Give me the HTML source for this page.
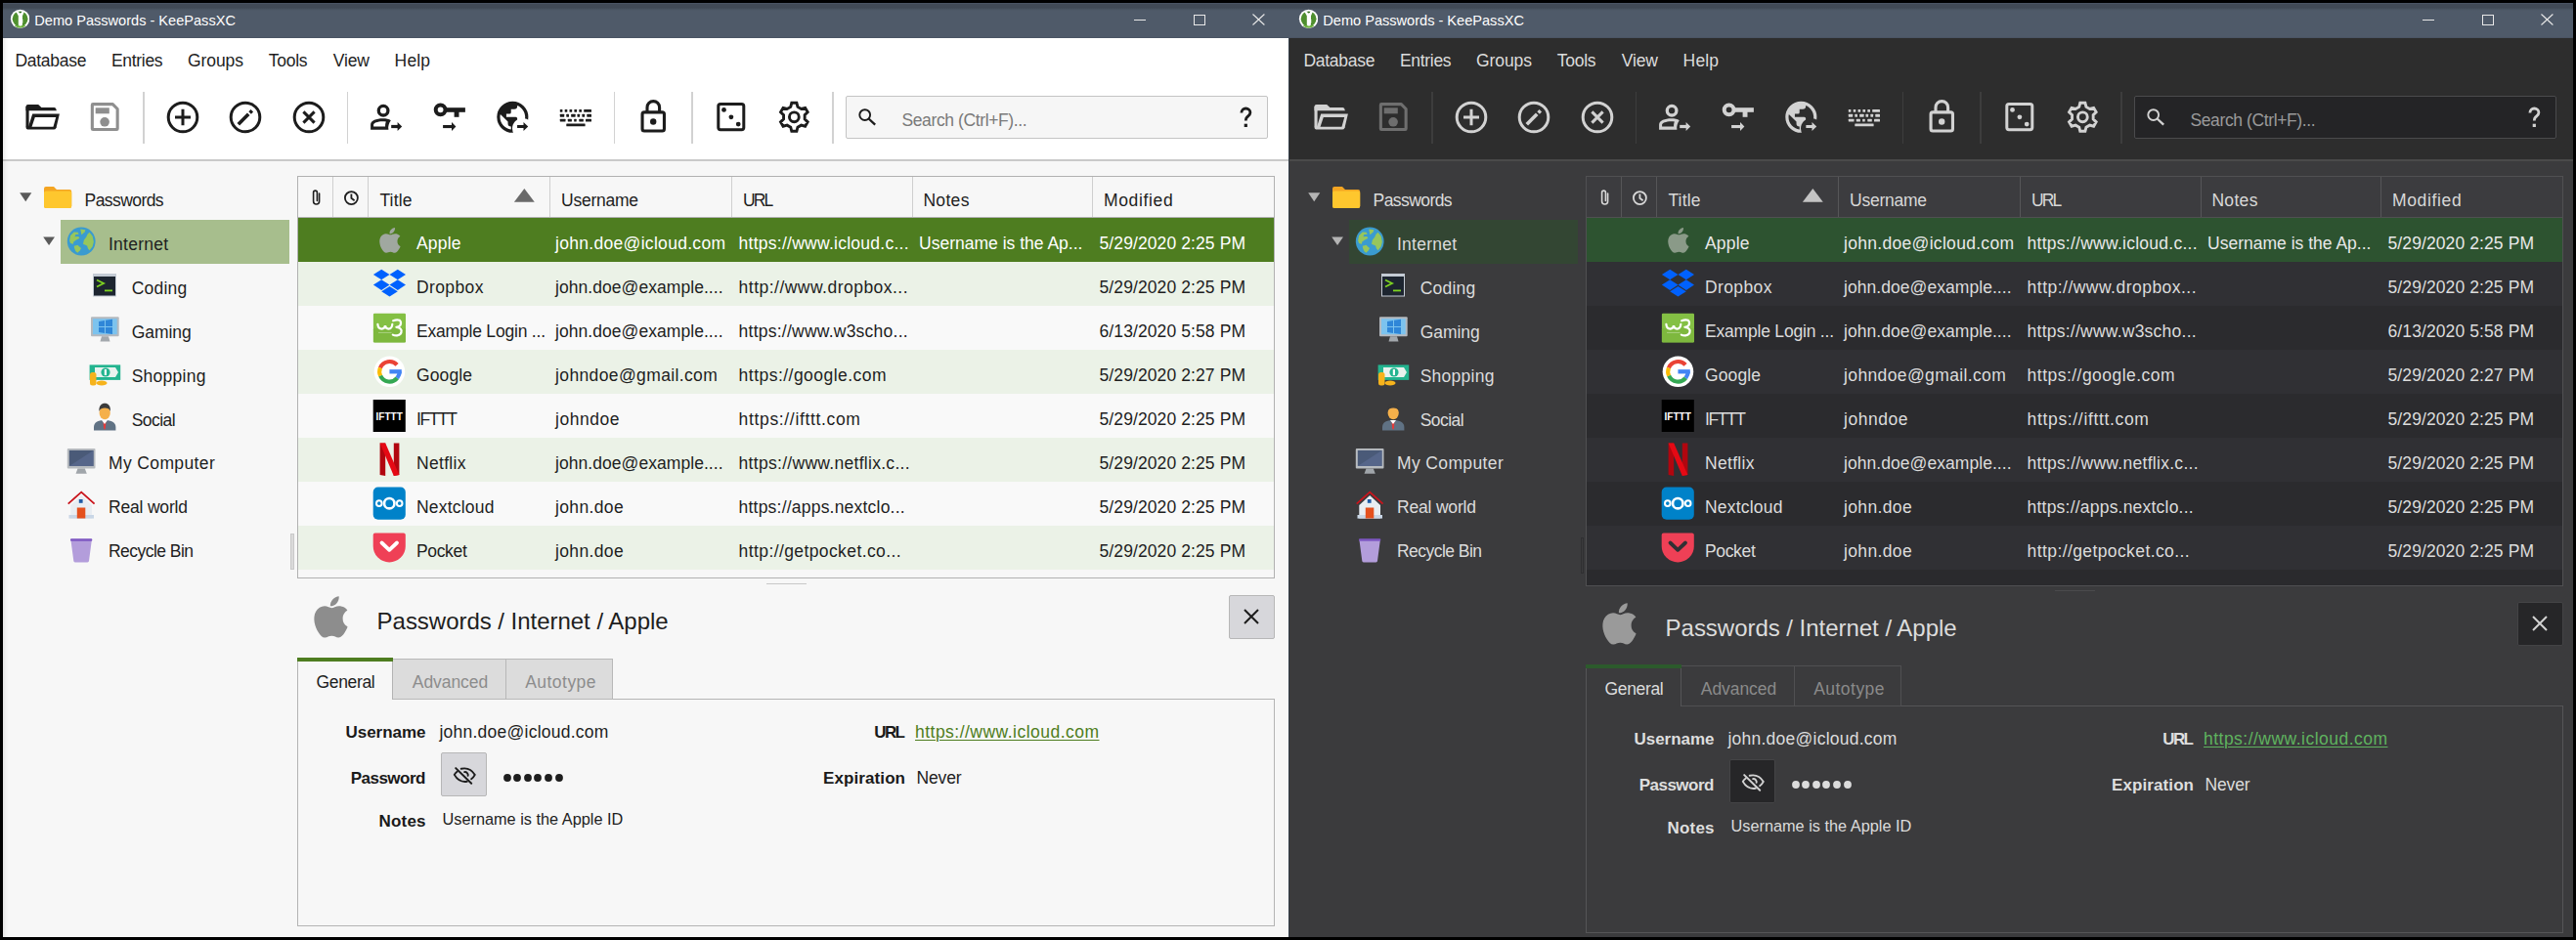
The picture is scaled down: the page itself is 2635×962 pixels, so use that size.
<!DOCTYPE html><html><head><meta charset="utf-8"><style>html,body{margin:0;padding:0;}body{width:2635px;height:962px;background:#000;position:relative;overflow:hidden;font-family:"Liberation Sans",sans-serif;}body>div,body>svg{position:absolute;}</style></head><body>
<div style="left:3.00px;top:3.00px;width:1315.00px;height:956.00px;background:#f7f7f7;"></div>
<div style="left:3.00px;top:3.00px;width:1315.00px;height:36.00px;background:linear-gradient(#4a5462 0px,#4a5462 0.8px,#414a56 1px,#414a56 5px,#4c5765 7px,#4f5a69 8.5px,#4f5a69 34.6px,#4a5463 35.2px);"></div>
<svg style="left:9.60px;top:9.00px;width:20.70px;height:20.70px" viewBox="9.60 9.00 20.70 20.70"><g transform="translate(0.00,0)"><circle cx="20.2" cy="19.35" r="9.7" fill="#ffffff"/><circle cx="20.2" cy="19.35" r="7.9" fill="#4f8f2f"/><path d="M20.2 21 m-6 5 a7.9 7.9 0 0 0 12 0 Z" fill="#6db33f"/><path d="M16 11.9 Q20.2 10.9 24.4 11.9 L22.6 16.2 V20 L23.3 20.8 L22.5 21.6 L23.2 22.5 L22.5 23.4 V25.6 L21.4 26.4 H19.4 L18.4 25.4 V16.2 Z" fill="#ffffff"/><ellipse cx="20.3" cy="12.6" rx="1.5" ry="0.8" fill="#2f6a1f"/></g></svg>
<div style="left:35.30px;top:14.24px;font-size:14.60px;line-height:14.60px;color:#ffffff;white-space:pre;letter-spacing:-0.015px;">Demo Passwords - KeePassXC</div>
<div style="left:1160.00px;top:19.50px;width:12.00px;height:1.00px;background:#e8e8e8;"></div>
<div style="left:1220.80px;top:14.50px;width:11.90px;height:11.10px;background:transparent;border:1px solid #e8e8e8;box-sizing:border-box;"></div>
<svg style="left:1281.00px;top:14.00px;width:13.00px;height:12.00px" viewBox="1281.00 14.00 13.00 12.00"><path d="M1281.5 14.5 L1293.4 25.5 M1293.4 14.5 L1281.5 25.5" stroke="#e8e8e8" stroke-width="1.1"/></svg>
<div style="left:3.00px;top:39.00px;width:1315.00px;height:124.00px;background:#ffffff;"></div>
<div style="left:3.00px;top:163.00px;width:1315.00px;height:2.00px;background:#c9c9c9;"></div>
<div style="left:15.40px;top:53.99px;font-size:17.50px;line-height:17.50px;color:#1e1e1e;white-space:pre;letter-spacing:-0.271px;">Database</div>
<div style="left:114.00px;top:53.99px;font-size:17.50px;line-height:17.50px;color:#1e1e1e;white-space:pre;letter-spacing:-0.321px;">Entries</div>
<div style="left:192.00px;top:53.99px;font-size:17.50px;line-height:17.50px;color:#1e1e1e;white-space:pre;letter-spacing:-0.080px;">Groups</div>
<div style="left:274.70px;top:53.99px;font-size:17.50px;line-height:17.50px;color:#1e1e1e;white-space:pre;letter-spacing:-0.241px;">Tools</div>
<div style="left:340.80px;top:53.99px;font-size:17.50px;line-height:17.50px;color:#1e1e1e;white-space:pre;letter-spacing:-0.142px;">View</div>
<div style="left:403.60px;top:53.99px;font-size:17.50px;line-height:17.50px;color:#1e1e1e;white-space:pre;letter-spacing:0.146px;">Help</div>
<svg style="left:24.00px;top:104.00px;width:39.00px;height:31.00px" viewBox="24.00 104.00 39.00 31.00"><g transform="translate(0.00,0)" fill="#1c1c1c"><path d="M26.5 113.2 V109.1 Q26.5 106.9 28.7 106.9 H39.2 L42.4 110 H55.6 Q57.3 110.1 57.9 113.2 Z"/><rect x="26.5" y="109" width="3.1" height="21"/><path d="M26.5 129.7 H57.9 L57.4 131 Q56.8 132.6 55 132.6 H29.4 Q26.5 132.6 26.5 130 Z"/><path d="M33.2 116.5 H60.9 L57.6 130.5 H54.3 L57.2 119.9 H35.8 L32.3 130.5 H28.8 Z"/></g></svg>
<svg style="left:91.00px;top:103.00px;width:33.00px;height:33.00px" viewBox="91.00 103.00 33.00 33.00"><g transform="translate(0.00,0)"><path d="M94.35 107.4 Q94.35 106.65 95.1 106.65 H115.3 L120.15 111.5 V131.7 Q120.15 132.45 119.4 132.45 H95.1 Q94.35 132.45 94.35 131.7 Z" fill="none" stroke="#8f8f8f" stroke-width="3.1" stroke-linejoin="round"/><rect x="97.7" y="110.3" width="14.1" height="6" fill="#8f8f8f"/><circle cx="107.1" cy="124.8" r="4.8" fill="#8f8f8f"/></g></svg>
<div style="left:146.40px;top:94.20px;width:1.20px;height:52.60px;background:#d2d2d2;"></div>
<div style="left:354.80px;top:94.20px;width:1.20px;height:52.60px;background:#d2d2d2;"></div>
<div style="left:627.90px;top:94.20px;width:1.20px;height:52.60px;background:#d2d2d2;"></div>
<div style="left:707.40px;top:94.20px;width:1.20px;height:52.60px;background:#d2d2d2;"></div>
<div style="left:851.40px;top:94.20px;width:1.20px;height:52.60px;background:#d2d2d2;"></div>
<svg style="left:169.60px;top:102.80px;width:34.00px;height:34.00px" viewBox="169.60 102.80 34.00 34.00"><circle cx="186.60" cy="119.80" r="14.8" fill="none" stroke="#1c1c1c" stroke-width="3"/><path d="M178.60 119.80 H194.60 M186.60 111.60 V128.00" stroke="#1c1c1c" stroke-width="3"/></svg>
<svg style="left:234.30px;top:102.80px;width:34.00px;height:34.00px" viewBox="234.30 102.80 34.00 34.00"><circle cx="251.30" cy="119.80" r="14.8" fill="none" stroke="#1c1c1c" stroke-width="3"/><path d="M244.10 127.00 L254.50 116.60" stroke="#1c1c1c" stroke-width="3.6"/><path d="M255.90 115.20 L258.10 113.00" stroke="#1c1c1c" stroke-width="3.6"/></svg>
<svg style="left:299.00px;top:102.80px;width:34.00px;height:34.00px" viewBox="299.00 102.80 34.00 34.00"><circle cx="316.00" cy="119.80" r="14.8" fill="none" stroke="#1c1c1c" stroke-width="3"/><path d="M310.40 114.20 L321.60 125.40 M321.60 114.20 L310.40 125.40" stroke="#1c1c1c" stroke-width="3"/></svg>
<svg style="left:377.00px;top:104.00px;width:36.00px;height:32.00px" viewBox="377.00 104.00 36.00 32.00"><g transform="translate(0.00,0)" fill="#1c1c1c"><circle cx="392.1" cy="113.2" r="4.8" fill="none" stroke="#1c1c1c" stroke-width="3.3"/><path fill-rule="evenodd" d="M379.1 132.8 V127.5 C379.1 123.5 385 121.3 391.5 121.3 C395 121.3 398 121.8 399.8 123.2 C398 125.5 396.6 129.5 397.4 132.8 Z M382.1 129.6 H394.1 C394 127.6 394.3 125.9 394.9 124.6 C393.6 124.4 392.5 124.3 391.5 124.3 C386 124.3 382.1 126 382.1 127.8 Z"/><rect x="400.2" y="127.9" width="7.2" height="3.2"/><path d="M406.6 124.9 L411.2 129.5 L406.6 134 Z"/></g></svg>
<svg style="left:441.00px;top:103.00px;width:37.00px;height:33.00px" viewBox="441.00 103.00 37.00 33.00"><g transform="translate(0.00,0)" fill="#1c1c1c"><circle cx="450.6" cy="112.3" r="4.9" fill="none" stroke="#1c1c1c" stroke-width="4"/><rect x="456" y="110.2" width="19.9" height="4.6"/><rect x="464.6" y="114" width="4.9" height="5.8"/><rect x="453.1" y="128" width="9.4" height="3.1"/><path d="M462 124.9 L466.4 129.5 L462 134 Z"/></g></svg>
<svg style="left:506.00px;top:102.00px;width:37.00px;height:36.00px" viewBox="506.00 102.00 37.00 36.00"><g transform="translate(0.00,0)"><g transform="translate(524.35,119.8) scale(1.605) translate(-12,-12)"><path fill="#1c1c1c" fill-rule="evenodd" d="M17.9,17.39C17.64,16.59 16.89,16 16,16H15V13A1,1 0 0,0 14,12H8V10H10A1,1 0 0,0 11,9V7H13A2,2 0 0,0 15,5V4.59C17.93,5.77 20,8.64 20,12C20,14.08 19.2,15.97 17.9,17.39M11,19.93C7.05,19.44 4,16.08 4,12C4,11.38 4.08,10.78 4.21,10.21L9,15V16A2,2 0 0,0 11,18M12,2A10,10 0 0,0 2,12A10,10 0 0,0 12,22A10,10 0 0,0 22,12A10,10 0 0,0 12,2Z"/></g><circle cx="534.6" cy="131.6" r="10.6" fill="#ffffff"/><rect x="529.3" y="128" width="7" height="3"/><path d="M535.5 125 L540.2 129.5 L535.5 134 Z" fill="#1c1c1c"/><rect x="529.3" y="128" width="7" height="3" fill="#1c1c1c"/></g></svg>
<svg style="left:571.00px;top:110.00px;width:36.00px;height:21.00px" viewBox="571.00 110.00 36.00 21.00"><g transform="translate(0.00,0)"><rect x="572.80" y="111.90" width="2.60" height="2.90" rx="0.5" fill="#1c1c1c"/><rect x="577.70" y="111.90" width="2.60" height="2.90" rx="0.5" fill="#1c1c1c"/><rect x="582.50" y="111.90" width="2.70" height="2.90" rx="0.5" fill="#1c1c1c"/><rect x="587.40" y="111.90" width="2.70" height="2.90" rx="0.5" fill="#1c1c1c"/><rect x="592.30" y="111.90" width="2.70" height="2.90" rx="0.5" fill="#1c1c1c"/><rect x="597.20" y="111.90" width="7.80" height="2.90" rx="0.5" fill="#1c1c1c"/><rect x="572.80" y="116.80" width="4.40" height="2.90" rx="0.5" fill="#1c1c1c"/><rect x="579.30" y="116.80" width="2.70" height="2.90" rx="0.5" fill="#1c1c1c"/><rect x="584.20" y="116.80" width="4.40" height="2.90" rx="0.5" fill="#1c1c1c"/><rect x="590.50" y="116.80" width="2.60" height="2.90" rx="0.5" fill="#1c1c1c"/><rect x="595.40" y="116.80" width="2.70" height="2.90" rx="0.5" fill="#1c1c1c"/><rect x="600.30" y="116.80" width="4.70" height="2.90" rx="0.5" fill="#1c1c1c"/><rect x="572.80" y="121.70" width="5.70" height="2.90" rx="0.5" fill="#1c1c1c"/><rect x="580.80" y="121.70" width="4.10" height="2.90" rx="0.5" fill="#1c1c1c"/><rect x="587.20" y="121.70" width="2.50" height="2.90" rx="0.5" fill="#1c1c1c"/><rect x="592.30" y="121.70" width="4.50" height="2.90" rx="0.5" fill="#1c1c1c"/><rect x="599.00" y="121.70" width="6.00" height="2.90" rx="0.5" fill="#1c1c1c"/><rect x="579.30" y="126.40" width="19.30" height="2.90" rx="0.5" fill="#1c1c1c"/></g></svg>
<svg style="left:653.00px;top:100.00px;width:31.00px;height:38.00px" viewBox="653.00 100.00 31.00 38.00"><g transform="translate(0.00,0)" fill="none" stroke="#1c1c1c" stroke-width="3.1"><path d="M662 115 V109.9 A6.2 6.2 0 0 1 674.6 109.9 V115"/><rect x="657.05" y="114.85" width="22.4" height="19.2" rx="2"/><circle cx="668.2" cy="124.5" r="3.2" fill="#1c1c1c" stroke="none"/></g></svg>
<svg style="left:731.00px;top:103.00px;width:34.00px;height:34.00px" viewBox="731.00 103.00 34.00 34.00"><g transform="translate(0.00,0)"><rect x="734.8" y="106.4" width="26" height="26.4" rx="2.2" fill="none" stroke="#1c1c1c" stroke-width="3"/><circle cx="740.5" cy="112.4" r="2.4" fill="#1c1c1c"/><circle cx="747.9" cy="119.8" r="2.4" fill="#1c1c1c"/><circle cx="755.2" cy="127.1" r="2.4" fill="#1c1c1c"/></g></svg>
<svg style="left:794.00px;top:102.00px;width:37.00px;height:36.00px" viewBox="794.00 102.00 37.00 36.00"><g transform="translate(0.00,0)" fill="none" stroke="#1c1c1c" stroke-width="2.9" stroke-linejoin="miter"><path d="M808.75 109.40 L809.80 105.30 L814.90 105.30 L815.95 109.40 L819.56 111.48 L823.63 110.34 L826.18 114.76 L823.16 117.72 L823.16 121.88 L826.18 124.84 L823.63 129.26 L819.56 128.12 L815.95 130.20 L814.90 134.30 L809.80 134.30 L808.75 130.20 L805.14 128.12 L801.07 129.26 L798.52 124.84 L801.54 121.88 L801.54 117.72 L798.52 114.76 L801.07 110.34 L805.14 111.48 Z"/><circle cx="812.35" cy="119.80" r="4.9"/></g></svg>
<div style="left:865.00px;top:97.60px;width:431.50px;height:44.00px;background:#f6f6f6;border:1px solid #c4c4c4;box-sizing:border-box;border-radius:2px;"></div>
<svg style="left:876.00px;top:108.00px;width:22.00px;height:22.00px" viewBox="876.00 108.00 22.00 22.00"><g transform="translate(0.00,0)" fill="none" stroke="#1c1c1c"><circle cx="884.7" cy="117.6" r="5.4" stroke-width="1.9"/><path d="M888.6 121.5 L895.2 127.6" stroke-width="2.3"/></g></svg>
<div style="left:922.50px;top:115.49px;font-size:17.50px;line-height:17.50px;color:#7a7a7a;white-space:pre;letter-spacing:-0.392px;">Search (Ctrl+F)...</div>
<svg style="left:1266.00px;top:108.00px;width:17.00px;height:24.00px" viewBox="1266.00 108.00 17.00 24.00"><g transform="translate(0.00,0)" fill="none" stroke="#1c1c1c" stroke-width="2.8"><path d="M1269.9 115.6 C1269.9 112.6 1271.9 111 1274.3 111 C1276.9 111 1278.9 112.8 1278.9 115.2 C1278.9 117.6 1277 118.6 1275.6 119.9 C1274.6 120.8 1274.3 121.6 1274.3 123.6"/><rect x="1272.7" y="126.7" width="3.2" height="3.3" fill="#1c1c1c" stroke="none"/></g></svg>
<div style="left:62.00px;top:225.00px;width:234.00px;height:44.50px;background:#a7be8d;"></div>
<div style="left:86.60px;top:197.09px;font-size:17.50px;line-height:17.50px;color:#1e1e1e;white-space:pre;letter-spacing:-0.572px;">Passwords</div>
<div style="left:110.90px;top:241.99px;font-size:17.50px;line-height:17.50px;color:#1e1e1e;white-space:pre;letter-spacing:0.282px;">Internet</div>
<div style="left:134.70px;top:286.89px;font-size:17.50px;line-height:17.50px;color:#1e1e1e;white-space:pre;letter-spacing:0.205px;">Coding</div>
<div style="left:134.70px;top:331.79px;font-size:17.50px;line-height:17.50px;color:#1e1e1e;white-space:pre;letter-spacing:-0.050px;">Gaming</div>
<div style="left:134.70px;top:376.69px;font-size:17.50px;line-height:17.50px;color:#1e1e1e;white-space:pre;letter-spacing:0.252px;">Shopping</div>
<div style="left:134.70px;top:421.59px;font-size:17.50px;line-height:17.50px;color:#1e1e1e;white-space:pre;letter-spacing:-0.537px;">Social</div>
<div style="left:111.00px;top:466.49px;font-size:17.50px;line-height:17.50px;color:#1e1e1e;white-space:pre;letter-spacing:0.370px;">My Computer</div>
<div style="left:111.00px;top:511.39px;font-size:17.50px;line-height:17.50px;color:#1e1e1e;white-space:pre;letter-spacing:-0.188px;">Real world</div>
<div style="left:111.00px;top:556.29px;font-size:17.50px;line-height:17.50px;color:#1e1e1e;white-space:pre;letter-spacing:-0.540px;">Recycle Bin</div>
<svg style="left:20.00px;top:197.00px;width:13.00px;height:10.00px" viewBox="20.00 197.00 13.00 10.00"><path d="M20.20 197.2 L32.30 197.2 L26.25 206.2 Z" fill="#5a5a5a"/></svg>
<svg style="left:44.00px;top:242.00px;width:13.00px;height:10.00px" viewBox="44.00 242.00 13.00 10.00"><path d="M44.20 242.6 L56.00 242.6 L50.10 250.9 Z" fill="#5a5a5a"/></svg>
<svg style="left:44.00px;top:189.00px;width:31.00px;height:26.00px" viewBox="44.00 189.00 31.00 26.00"><g transform="translate(0.00,0)"><path d="M45 193 A2 2 0 0 1 47 191 H55 L58 194 H71.2 A2 2 0 0 1 73.2 196 V211 A2 2 0 0 1 71.2 213 H47 A2 2 0 0 1 45 211 Z" fill="#f4a522"/><path d="M45 197 A2 2 0 0 1 47 195.5 H71.2 A2 2 0 0 1 73.2 197.5 V211 A2 2 0 0 1 71.2 213 H47 A2 2 0 0 1 45 211 Z" fill="#fec72e"/></g></svg>
<svg style="left:67.00px;top:231.00px;width:32.00px;height:32.00px" viewBox="67.00 231.00 32.00 32.00"><g transform="translate(0.00,0)"><circle cx="83.2" cy="247" r="14.4" fill="#3a9bd0"/><path d="M71.1 246.2 L72.1 240.9 L75.7 237.5 L79.8 237.7 L80.6 239.7 L77.3 240.1 L76.5 242.3 L80.2 242 L81.4 243.8 L77.7 245.8 L75.3 247.4 L74.9 249.8 L72.1 249 Z" fill="#97c65c"/><path d="M82.2 234.5 L87.4 235.3 L86.6 237.5 L83.4 240.3 Z" fill="#97c65c"/><path d="M75.7 251.8 L79.4 250.8 L83 253.9 L81.8 256.3 L79.4 258.7 L77.3 257.1 L76.1 253.9 Z" fill="#97c65c"/><path d="M91.5 237.7 L94.7 241.7 L95.9 247.4 L94.7 252.3 L91.5 256.3 L89.9 254.3 L89.1 251.4 L85 249.8 L85.8 245.8 L88.3 242.6 L89.5 239.7 Z" fill="#97c65c"/></g></svg>
<svg style="left:94.00px;top:279.00px;width:27.00px;height:26.00px" viewBox="94.00 279.00 27.00 26.00"><g transform="translate(0.00,0)"><rect x="95" y="280" width="24" height="23.5" fill="#c4cbd4"/><rect x="96" y="283" width="22" height="19.5" fill="#1d2530"/><path d="M99 286.5 L106 290 L99 293.5" fill="none" stroke="#7ed321" stroke-width="1.8"/><rect x="107" y="296.5" width="8" height="1.8" fill="#7ed321"/></g></svg>
<svg style="left:92.00px;top:323.00px;width:31.00px;height:28.00px" viewBox="92.00 323.00 31.00 28.00"><g transform="translate(0.00,0)"><rect x="93" y="324.2" width="28.7" height="20" rx="1" fill="#b4b9bf"/><rect x="95" y="326.2" width="24.7" height="16" fill="#7cc3ee"/><path d="M101 329 L107 328 V334 H101 Z M108 327.8 L115 326.8 V334 H108 Z M101 335 H107 V341 L101 340 Z M108 335 H115 V342 L108 341 Z" fill="#2f86d8"/><path d="M104 344.2 H111 L112.5 349.5 H102.5 Z" fill="#a3a8ad"/></g></svg>
<svg style="left:90.00px;top:372.00px;width:35.00px;height:24.00px" viewBox="90.00 372.00 35.00 24.00"><g transform="translate(0.00,0)"><rect x="91.6" y="373.4" width="31.6" height="15.5" fill="#23b48f"/><path d="M97 376 H118 L121 381 L118 386 H97 Z" fill="#e8f2ee"/><circle cx="108" cy="381" r="4.6" fill="#23b48f"/><rect x="106.8" y="378" width="2.2" height="6" fill="#ffffff"/><rect x="92" y="381" width="6.5" height="13.5" rx="2.5" fill="#f6b31c"/><ellipse cx="104" cy="392" rx="5.5" ry="2.6" fill="#f6b31c"/></g></svg>
<svg style="left:95.00px;top:411.00px;width:25.00px;height:31.00px" viewBox="95.00 411.00 25.00 31.00"><g transform="translate(0.00,0)"><path d="M96 440.5 V437 C96 432.5 100 430 107 430 C114 430 118.4 432.5 118.4 437 V440.5 Z" fill="#607284"/><path d="M105.5 430.5 L108.5 430.5 L108 438 L107 440 L106 438 Z" fill="#e23b3b"/><path d="M104 430 L107 434 L110 430 Z" fill="#ffffff"/><ellipse cx="107.2" cy="422.5" rx="5.6" ry="6.8" fill="#f5b04a"/><path d="M101.4 421 C101 415 104 412.7 107.2 412.7 C110.5 412.7 113.3 415 113 421 C112 418 110 417.5 107.2 417.5 C104.3 417.5 102.5 418 101.4 421 Z" fill="#3b3b3b"/></g></svg>
<svg style="left:67.00px;top:457.00px;width:32.00px;height:29.00px" viewBox="67.00 457.00 32.00 29.00"><g transform="translate(0.00,0)"><rect x="68.8" y="458.9" width="28.7" height="20.5" rx="1" fill="#b8bcc0"/><rect x="70.8" y="460.9" width="24.7" height="16" fill="#4a5a78"/><path d="M70.8 476.9 L95.5 460.9 V476.9 Z" fill="#56668a"/><path d="M79.5 479.4 H86.8 L88.8 484.8 H77.5 Z" fill="#a0a5aa"/></g></svg>
<svg style="left:68.00px;top:502.00px;width:30.00px;height:30.00px" viewBox="68.00 502.00 30.00 30.00"><g transform="translate(0.00,0)"><path d="M72.3 517 L83.2 507 L94 517 V530.6 H72.3 Z" fill="#e9edf2"/><rect x="70.5" y="527" width="25.5" height="3.6" fill="#c9d6e6"/><path d="M69.7 515.6 L83.2 503.6 L96.6 515.6" fill="none" stroke="#c9141c" stroke-width="1.8"/><rect x="80.8" y="511" width="3.8" height="3.8" fill="#1f5aa6"/><rect x="78.8" y="519.5" width="8.5" height="11" fill="#e4501e"/></g></svg>
<svg style="left:71.00px;top:550.00px;width:25.00px;height:27.00px" viewBox="71.00 550.00 25.00 27.00"><g transform="translate(0.00,0)"><path d="M72.5 553 H93.8 L91 574 A1.5 1.5 0 0 1 89.5 575.4 H76.8 A1.5 1.5 0 0 1 75.3 574 Z" fill="#b39ddb"/><rect x="72" y="551.2" width="22.3" height="2.6" rx="1" fill="#7e57c2"/></g></svg>
<div style="left:297.00px;top:546.00px;width:4.00px;height:36.50px;background:#dadada;border:1px solid #c9c9c9;box-sizing:border-box;"></div>
<div style="left:3.00px;top:39.00px;width:6.00px;height:920.00px;background:linear-gradient(to right, rgba(0,0,0,0.08), rgba(0,0,0,0.02) 60%, rgba(0,0,0,0));"></div>
<div style="left:304.00px;top:180.00px;width:1000.00px;height:412.00px;background:#f7f7f7;border:1px solid #b1b1b1;box-sizing:border-box;"></div>
<div style="left:305.00px;top:181.00px;width:998.00px;height:41.00px;background:#f7f7f7;"></div>
<div style="left:305.00px;top:222.00px;width:998.00px;height:1.00px;background:#b1b1b1;"></div>
<div style="left:340.00px;top:181.00px;width:1.00px;height:41.00px;background:#cfcfcf;"></div>
<div style="left:376.00px;top:181.00px;width:1.00px;height:41.00px;background:#cfcfcf;"></div>
<div style="left:562.00px;top:181.00px;width:1.00px;height:41.00px;background:#cfcfcf;"></div>
<div style="left:748.00px;top:181.00px;width:1.00px;height:41.00px;background:#cfcfcf;"></div>
<div style="left:933.00px;top:181.00px;width:1.00px;height:41.00px;background:#cfcfcf;"></div>
<div style="left:1117.00px;top:181.00px;width:1.00px;height:41.00px;background:#cfcfcf;"></div>
<div style="left:388.40px;top:197.09px;font-size:17.50px;line-height:17.50px;color:#1e1e1e;white-space:pre;letter-spacing:0.156px;">Title</div>
<div style="left:574.10px;top:197.09px;font-size:17.50px;line-height:17.50px;color:#1e1e1e;white-space:pre;letter-spacing:-0.252px;">Username</div>
<div style="left:760.00px;top:197.09px;font-size:17.50px;line-height:17.50px;color:#1e1e1e;white-space:pre;letter-spacing:-1.850px;">URL</div>
<div style="left:944.40px;top:197.09px;font-size:17.50px;line-height:17.50px;color:#1e1e1e;white-space:pre;letter-spacing:0.331px;">Notes</div>
<div style="left:1129.00px;top:197.09px;font-size:17.50px;line-height:17.50px;color:#1e1e1e;white-space:pre;letter-spacing:0.650px;">Modified</div>
<svg style="left:316.00px;top:191.00px;width:16.00px;height:22.00px" viewBox="316.00 191.00 16.00 22.00"><g transform="translate(0.00,0)" fill="none" stroke="#1e1e1e" stroke-width="1.6" stroke-linecap="round"><path d="M326.6 198 V206 A3 3 0 0 1 320.6 206 V197 A1.9 1.9 0 0 1 324.4 197 V205.5"/></g></svg>
<svg style="left:350.00px;top:194.00px;width:19.00px;height:18.00px" viewBox="350.00 194.00 19.00 18.00"><g transform="translate(0.00,0)" fill="none" stroke="#1e1e1e" stroke-width="1.8"><circle cx="359.4" cy="202.6" r="6.5"/><path d="M359.4 198.5 V202.8 L362.6 205.2"/></g></svg>
<svg style="left:524.00px;top:191.00px;width:25.00px;height:18.00px" viewBox="524.00 191.00 25.00 18.00"><path d="M525.90 206.8 L536.35 192.9 L546.80 206.8 Z" fill="#6a6a6a"/></svg>
<div style="left:305.00px;top:222.50px;width:998.00px;height:45.00px;background:#4e7d20;"></div>
<div style="left:426.00px;top:240.69px;font-size:17.50px;line-height:17.50px;color:#ffffff;white-space:pre;letter-spacing:0.175px;">Apple</div>
<div style="left:568.04px;top:240.69px;font-size:17.50px;line-height:17.50px;color:#ffffff;white-space:pre;letter-spacing:0.302px;">john.doe@icloud.com</div>
<div style="left:755.60px;top:240.69px;font-size:17.50px;line-height:17.50px;color:#ffffff;white-space:pre;letter-spacing:0.261px;">https://www.icloud.c...</div>
<div style="left:940.00px;top:240.69px;font-size:17.50px;line-height:17.50px;color:#ffffff;white-space:pre;letter-spacing:0.005px;">Username is the Ap...</div>
<div style="left:1124.50px;top:240.69px;font-size:17.50px;line-height:17.50px;color:#ffffff;white-space:pre;letter-spacing:0.102px;">5/29/2020 2:25 PM</div>
<div style="left:305.00px;top:267.50px;width:998.00px;height:45.00px;background:#ebf2e7;"></div>
<div style="left:426.00px;top:285.69px;font-size:17.50px;line-height:17.50px;color:#1e1e1e;white-space:pre;letter-spacing:0.392px;">Dropbox</div>
<div style="left:568.04px;top:285.69px;font-size:17.50px;line-height:17.50px;color:#1e1e1e;white-space:pre;letter-spacing:0.054px;">john.doe@example....</div>
<div style="left:755.60px;top:285.69px;font-size:17.50px;line-height:17.50px;color:#1e1e1e;white-space:pre;letter-spacing:0.478px;">http://www.dropbox...</div>
<div style="left:1124.50px;top:285.69px;font-size:17.50px;line-height:17.50px;color:#1e1e1e;white-space:pre;letter-spacing:0.102px;">5/29/2020 2:25 PM</div>
<div style="left:305.00px;top:312.50px;width:998.00px;height:45.00px;background:#f9f9f9;"></div>
<div style="left:426.00px;top:330.69px;font-size:17.50px;line-height:17.50px;color:#1e1e1e;white-space:pre;letter-spacing:-0.199px;">Example Login ...</div>
<div style="left:568.04px;top:330.69px;font-size:17.50px;line-height:17.50px;color:#1e1e1e;white-space:pre;letter-spacing:0.054px;">john.doe@example....</div>
<div style="left:755.60px;top:330.69px;font-size:17.50px;line-height:17.50px;color:#1e1e1e;white-space:pre;letter-spacing:0.237px;">https://www.w3scho...</div>
<div style="left:1124.50px;top:330.69px;font-size:17.50px;line-height:17.50px;color:#1e1e1e;white-space:pre;letter-spacing:0.102px;">6/13/2020 5:58 PM</div>
<div style="left:305.00px;top:357.50px;width:998.00px;height:45.00px;background:#ebf2e7;"></div>
<div style="left:426.00px;top:375.69px;font-size:17.50px;line-height:17.50px;color:#1e1e1e;white-space:pre;letter-spacing:0.113px;">Google</div>
<div style="left:568.04px;top:375.69px;font-size:17.50px;line-height:17.50px;color:#1e1e1e;white-space:pre;letter-spacing:0.374px;">johndoe@gmail.com</div>
<div style="left:755.60px;top:375.69px;font-size:17.50px;line-height:17.50px;color:#1e1e1e;white-space:pre;letter-spacing:0.472px;">https://google.com</div>
<div style="left:1124.50px;top:375.69px;font-size:17.50px;line-height:17.50px;color:#1e1e1e;white-space:pre;letter-spacing:0.102px;">5/29/2020 2:27 PM</div>
<div style="left:305.00px;top:402.50px;width:998.00px;height:45.00px;background:#f9f9f9;"></div>
<div style="left:426.00px;top:420.69px;font-size:17.50px;line-height:17.50px;color:#1e1e1e;white-space:pre;letter-spacing:-1.400px;">IFTTT</div>
<div style="left:568.04px;top:420.69px;font-size:17.50px;line-height:17.50px;color:#1e1e1e;white-space:pre;letter-spacing:0.544px;">johndoe</div>
<div style="left:755.60px;top:420.69px;font-size:17.50px;line-height:17.50px;color:#1e1e1e;white-space:pre;letter-spacing:0.659px;">https://ifttt.com</div>
<div style="left:1124.50px;top:420.69px;font-size:17.50px;line-height:17.50px;color:#1e1e1e;white-space:pre;letter-spacing:0.102px;">5/29/2020 2:25 PM</div>
<div style="left:305.00px;top:447.50px;width:998.00px;height:45.00px;background:#ebf2e7;"></div>
<div style="left:426.00px;top:465.69px;font-size:17.50px;line-height:17.50px;color:#1e1e1e;white-space:pre;letter-spacing:0.308px;">Netflix</div>
<div style="left:568.04px;top:465.69px;font-size:17.50px;line-height:17.50px;color:#1e1e1e;white-space:pre;letter-spacing:0.054px;">john.doe@example....</div>
<div style="left:755.60px;top:465.69px;font-size:17.50px;line-height:17.50px;color:#1e1e1e;white-space:pre;letter-spacing:0.293px;">https://www.netflix.c...</div>
<div style="left:1124.50px;top:465.69px;font-size:17.50px;line-height:17.50px;color:#1e1e1e;white-space:pre;letter-spacing:0.102px;">5/29/2020 2:25 PM</div>
<div style="left:305.00px;top:492.50px;width:998.00px;height:45.00px;background:#f9f9f9;"></div>
<div style="left:426.00px;top:510.69px;font-size:17.50px;line-height:17.50px;color:#1e1e1e;white-space:pre;letter-spacing:0.202px;">Nextcloud</div>
<div style="left:568.04px;top:510.69px;font-size:17.50px;line-height:17.50px;color:#1e1e1e;white-space:pre;letter-spacing:0.350px;">john.doe</div>
<div style="left:755.60px;top:510.69px;font-size:17.50px;line-height:17.50px;color:#1e1e1e;white-space:pre;letter-spacing:0.210px;">https://apps.nextclo...</div>
<div style="left:1124.50px;top:510.69px;font-size:17.50px;line-height:17.50px;color:#1e1e1e;white-space:pre;letter-spacing:0.102px;">5/29/2020 2:25 PM</div>
<div style="left:305.00px;top:537.50px;width:998.00px;height:45.00px;background:#ebf2e7;"></div>
<div style="left:426.00px;top:555.69px;font-size:17.50px;line-height:17.50px;color:#1e1e1e;white-space:pre;letter-spacing:-0.352px;">Pocket</div>
<div style="left:568.04px;top:555.69px;font-size:17.50px;line-height:17.50px;color:#1e1e1e;white-space:pre;letter-spacing:0.350px;">john.doe</div>
<div style="left:755.60px;top:555.69px;font-size:17.50px;line-height:17.50px;color:#1e1e1e;white-space:pre;letter-spacing:0.401px;">http://getpocket.co...</div>
<div style="left:1124.50px;top:555.69px;font-size:17.50px;line-height:17.50px;color:#1e1e1e;white-space:pre;letter-spacing:0.102px;">5/29/2020 2:25 PM</div>
<svg style="left:385.60px;top:230.70px;width:25.60px;height:29.80px" viewBox="385.60 230.70 25.60 29.80"><g transform="translate(386.313,231.853) scale(0.6771,0.6515)" fill="#a0a8a0"><g transform="translate(21.65,6.2) scale(0.8) translate(-19.55,-5.9)"><path d="M24.5 0 C24.8 3.2 23.6 6.3 21.7 8.4 C19.9 10.5 17 12 14.3 11.8 C14 8.8 15.3 5.7 17.1 3.8 C19 1.7 22 0.2 24.5 0 Z"/></g><path d="M29.2 22.8 C29.2 17.5 33.4 15 33.6 14.8 C31.2 11.3 27.6 10.9 26.3 10.8 C23.2 10.5 20.3 12.6 18.7 12.6 C17.1 12.6 14.7 10.9 12.1 10.9 C8.7 11 5.6 12.9 3.9 15.9 C0.4 22 3 31 6.3 35.9 C8 38.3 9.9 41 12.4 40.9 C14.9 40.8 15.8 39.3 18.8 39.3 C21.8 39.3 22.6 40.9 25.2 40.9 C27.8 40.8 29.5 38.4 31.1 36 C33 33.3 33.8 30.6 33.8 30.5 C33.7 30.4 29.2 28.7 29.2 22.8 Z"/></g></svg>
<svg style="left:380.00px;top:274.00px;width:37.00px;height:31.00px" viewBox="380.00 274.00 37.00 31.00"><g transform="translate(0.00,0)"><g fill="#0061fe"><path d="M381.9 281 L390.2 275.7 L398.5 281 L390.2 286.3 Z"/><path d="M398.5 281 L406.8 275.7 L415 281 L406.8 286.3 Z"/><path d="M381.9 291.6 L390.2 286.3 L398.5 291.6 L390.2 296.9 Z"/><path d="M398.5 291.6 L406.8 286.3 L415 291.6 L406.8 296.9 Z"/><path d="M390.2 298.2 L398.5 292.9 L406.8 298.2 L398.5 303.5 Z"/></g></g></svg>
<svg style="left:380.00px;top:319.00px;width:37.00px;height:33.00px" viewBox="380.00 319.00 37.00 33.00"><g transform="translate(0.00,0)"><rect x="381.9" y="320.7" width="33.1" height="29.7" rx="1.2" fill="#84c044"/><rect x="381.9" y="336" width="33.1" height="14.4" rx="1.2" fill="#79b33b" opacity="0.6"/><path d="M386.4 331.8 Q386.6 336.6 390.6 336.6 Q393.6 336.6 394 333.2 Q394.4 336.6 397.4 336.6 Q401 336.6 401.3 331.8" fill="none" stroke="#ffffff" stroke-width="2.2" stroke-linecap="round"/><path d="M402.2 328.2 Q406 326.6 408.8 327.8 Q410.8 329.6 409.6 332.6 Q408.4 334.6 405.4 334.8 Q409.6 335 410.6 338.2 Q410.8 342.6 406.2 343.4 Q403.6 343.6 401.8 342.6" fill="none" stroke="#ffffff" stroke-width="2.2" stroke-linecap="round" stroke-linejoin="round"/><rect x="387" y="339.9" width="13.5" height="1" fill="#cfe6b8" opacity="0.55"/></g></svg>
<svg style="left:380.00px;top:363.00px;width:37.00px;height:35.00px" viewBox="380.00 363.00 37.00 35.00"><g transform="translate(0.00,0)"><circle cx="398.45" cy="380.30" r="15.8" fill="#ffffff"/><path d="M406.07 373.44 A10.25 10.25 0 0 0 388.95 376.46" fill="none" stroke="#ea4335" stroke-width="4.2"/><path d="M388.95 376.46 A10.25 10.25 0 0 0 389.16 384.63" fill="none" stroke="#fbbc05" stroke-width="4.2"/><path d="M389.16 384.63 A10.25 10.25 0 0 0 406.30 386.89" fill="none" stroke="#34a853" stroke-width="4.2"/><path d="M406.30 386.89 A10.25 10.25 0 0 0 408.70 380.30" fill="none" stroke="#4285f4" stroke-width="4.2"/><rect x="398.45" y="378.15" width="12.35" height="4.3" fill="#4285f4"/></g></svg>
<svg style="left:380.00px;top:408.00px;width:37.00px;height:36.00px" viewBox="380.00 408.00 37.00 36.00"><g transform="translate(0.00,0)"><rect x="381.7" y="409" width="33.1" height="33" fill="#000000"/><text x="384.6" y="429.9" font-family="Liberation Sans" font-weight="bold" font-size="10.4" textLength="27.2" lengthAdjust="spacingAndGlyphs" fill="#ffffff">IFTTT</text></g></svg>
<svg style="left:387.00px;top:452.00px;width:23.00px;height:36.00px" viewBox="387.00 452.00 23.00 36.00"><g transform="translate(0.00,0)"><path d="M388.6 453.5 H394.2 V486.9 L388.6 486 Z" fill="#b1060f"/><path d="M402.8 453.5 H408.4 V486 L402.8 486.9 Z" fill="#b1060f"/><path d="M388.6 453.5 H394.2 L408.4 486 L402.8 486.9 Z" fill="#e50914"/></g></svg>
<svg style="left:380.00px;top:497.00px;width:37.00px;height:36.00px" viewBox="380.00 497.00 37.00 36.00"><g transform="translate(0.00,0)"><rect x="381.7" y="498.6" width="33.1" height="33.1" rx="5" fill="#0082c9"/><circle cx="398.25" cy="515.15" r="5.2" fill="none" stroke="#ffffff" stroke-width="2.6"/><circle cx="387.8" cy="515.15" r="2.8" fill="none" stroke="#ffffff" stroke-width="2"/><circle cx="408.7" cy="515.15" r="2.8" fill="none" stroke="#ffffff" stroke-width="2"/></g></svg>
<svg style="left:380.00px;top:544.00px;width:37.00px;height:33.00px" viewBox="380.00 544.00 37.00 33.00"><g transform="translate(0.00,0)"><path d="M381.7 547.5 A2 2 0 0 1 383.7 545.5 H412.8 A2 2 0 0 1 414.8 547.5 V559 A16.55 16.4 0 0 1 381.7 559 Z" fill="#ef4056"/><path d="M390.5 555.5 L398.25 562.8 L406 555.5" fill="none" stroke="#ffffff" stroke-width="3.8" stroke-linecap="round" stroke-linejoin="round"/></g></svg>
<div style="left:783.50px;top:596.50px;width:41.00px;height:1.00px;background:#c8c8c8;"></div>
<svg style="left:318.70px;top:608.40px;width:38.60px;height:46.50px" viewBox="318.70 608.40 38.60 46.50"><g transform="translate(318.639,609.005) scale(1.0846,1.0732)" fill="#8d8d8d"><g transform="translate(21.65,6.2) scale(0.8) translate(-19.55,-5.9)"><path d="M24.5 0 C24.8 3.2 23.6 6.3 21.7 8.4 C19.9 10.5 17 12 14.3 11.8 C14 8.8 15.3 5.7 17.1 3.8 C19 1.7 22 0.2 24.5 0 Z"/></g><path d="M29.2 22.8 C29.2 17.5 33.4 15 33.6 14.8 C31.2 11.3 27.6 10.9 26.3 10.8 C23.2 10.5 20.3 12.6 18.7 12.6 C17.1 12.6 14.7 10.9 12.1 10.9 C8.7 11 5.6 12.9 3.9 15.9 C0.4 22 3 31 6.3 35.9 C8 38.3 9.9 41 12.4 40.9 C14.9 40.8 15.8 39.3 18.8 39.3 C21.8 39.3 22.6 40.9 25.2 40.9 C27.8 40.8 29.5 38.4 31.1 36 C33 33.3 33.8 30.6 33.8 30.5 C33.7 30.4 29.2 28.7 29.2 22.8 Z"/></g></svg>
<div style="left:385.60px;top:624.08px;font-size:24.00px;line-height:24.00px;color:#1e1e1e;white-space:pre;letter-spacing:-0.030px;">Passwords / Internet / Apple</div>
<div style="left:1256.50px;top:608.50px;width:47.50px;height:45.50px;background:#d7d7db;border:1px solid #b7b7b7;box-sizing:border-box;border-radius:2px;"></div>
<svg style="left:1271.20px;top:622.20px;width:18.00px;height:18.00px" viewBox="1271.20 622.20 18.00 18.00"><path d="M1273.20 624.20 L1287.20 638.20 M1287.20 624.20 L1273.20 638.20" stroke="#1c1c1c" stroke-width="2"/></svg>
<div style="left:304.00px;top:715.00px;width:1000.00px;height:232.50px;background:#f7f7f7;border:1px solid #b4b4b4;box-sizing:border-box;"></div>
<div style="left:401.00px;top:673.50px;width:116.50px;height:42.00px;background:#dcdcdc;border:1px solid #b8b8b8;box-sizing:border-box;"></div>
<div style="left:517.00px;top:673.50px;width:109.50px;height:42.00px;background:#dcdcdc;border:1px solid #b8b8b8;box-sizing:border-box;"></div>
<div style="left:304.00px;top:673.00px;width:97.50px;height:43.00px;background:#f7f7f7;border:1px solid #b4b4b4;border-bottom:none;box-sizing:border-box;"></div>
<div style="left:304.00px;top:673.00px;width:97.50px;height:4.00px;background:#4e7d20;"></div>
<div style="left:323.60px;top:690.09px;font-size:17.50px;line-height:17.50px;color:#1e1e1e;white-space:pre;letter-spacing:-0.350px;">General</div>
<div style="left:421.80px;top:690.09px;font-size:17.50px;line-height:17.50px;color:#8c8c8c;white-space:pre;letter-spacing:-0.068px;">Advanced</div>
<div style="left:537.20px;top:690.09px;font-size:17.50px;line-height:17.50px;color:#8c8c8c;white-space:pre;letter-spacing:0.466px;">Autotype</div>
<div style="left:353.50px;top:740.71px;font-size:17.00px;line-height:17.00px;color:#1a1a1a;white-space:pre;font-weight:bold;letter-spacing:-0.028px;">Username</div>
<div style="left:449.44px;top:741.09px;font-size:17.50px;line-height:17.50px;color:#1e1e1e;white-space:pre;letter-spacing:0.241px;">john.doe@icloud.com</div>
<div style="left:358.70px;top:788.31px;font-size:17.00px;line-height:17.00px;color:#1a1a1a;white-space:pre;font-weight:bold;letter-spacing:-0.504px;">Password</div>
<div style="left:451.00px;top:770.00px;width:47.00px;height:45.00px;background:#d7d7db;border:1px solid #b7b7b7;box-sizing:border-box;border-radius:2px;"></div>
<svg style="left:460.50px;top:778.50px;width:28.00px;height:28.00px" viewBox="460.50 778.50 28.00 28.00"><g transform="translate(0.00,0.00)" fill="none" stroke="#1c1c1c" stroke-width="1.9" stroke-linecap="round"><path d="M471.2 786.3 Q480.2 784.2 485.3 792.4 Q484 795 481.6 796.7"/><path d="M467.3 789 Q465 790.8 464.3 792.4 Q469 800.6 477.3 799.3"/><path d="M474.6 789.6 A3.2 3.2 0 0 1 478.2 793.4"/><path d="M465.7 785.6 L481.7 801.3" stroke-width="2"/></g></svg>
<svg style="left:513.50px;top:791.00px;width:10.00px;height:10.00px" viewBox="513.50 791.00 10.00 10.00"><circle cx="518.50" cy="796.00" r="3.9" fill="#1e1e1e"/></svg>
<svg style="left:524.10px;top:791.00px;width:10.00px;height:10.00px" viewBox="524.10 791.00 10.00 10.00"><circle cx="529.10" cy="796.00" r="3.9" fill="#1e1e1e"/></svg>
<svg style="left:534.70px;top:791.00px;width:10.00px;height:10.00px" viewBox="534.70 791.00 10.00 10.00"><circle cx="539.70" cy="796.00" r="3.9" fill="#1e1e1e"/></svg>
<svg style="left:545.30px;top:791.00px;width:10.00px;height:10.00px" viewBox="545.30 791.00 10.00 10.00"><circle cx="550.30" cy="796.00" r="3.9" fill="#1e1e1e"/></svg>
<svg style="left:555.90px;top:791.00px;width:10.00px;height:10.00px" viewBox="555.90 791.00 10.00 10.00"><circle cx="560.90" cy="796.00" r="3.9" fill="#1e1e1e"/></svg>
<svg style="left:566.50px;top:791.00px;width:10.00px;height:10.00px" viewBox="566.50 791.00 10.00 10.00"><circle cx="571.50" cy="796.00" r="3.9" fill="#1e1e1e"/></svg>
<div style="left:387.50px;top:831.71px;font-size:17.00px;line-height:17.00px;color:#1a1a1a;white-space:pre;font-weight:bold;letter-spacing:0.185px;">Notes</div>
<div style="left:452.50px;top:830.10px;font-size:16.30px;line-height:16.30px;color:#1e1e1e;white-space:pre;letter-spacing:0.007px;">Username is the Apple ID</div>
<div style="left:894.30px;top:740.71px;font-size:17.00px;line-height:17.00px;color:#1a1a1a;white-space:pre;font-weight:bold;letter-spacing:-1.618px;">URL</div>
<div style="left:936.00px;top:741.09px;font-size:17.50px;line-height:17.50px;color:#4e7d20;white-space:pre;letter-spacing:0.477px;text-decoration:underline;text-decoration-thickness:1px;text-underline-offset:2px;">https://www.icloud.com</div>
<div style="left:842.00px;top:788.31px;font-size:17.00px;line-height:17.00px;color:#1a1a1a;white-space:pre;font-weight:bold;letter-spacing:0.097px;">Expiration</div>
<div style="left:937.40px;top:788.09px;font-size:17.50px;line-height:17.50px;color:#1e1e1e;white-space:pre;letter-spacing:-0.106px;">Never</div>
<div style="left:1318.00px;top:3.00px;width:1318.00px;height:956.00px;background:#3b3b3d;"></div>
<div style="left:1318.00px;top:3.00px;width:1318.00px;height:36.00px;background:linear-gradient(#4a5462 0px,#4a5462 0.8px,#414a56 1px,#414a56 5px,#4c5765 7px,#4f5a69 8.5px,#4f5a69 34.6px,#4a5463 35.2px);"></div>
<svg style="left:1327.60px;top:9.00px;width:20.70px;height:20.70px" viewBox="1327.60 9.00 20.70 20.70"><g transform="translate(1318.00,0)"><circle cx="20.2" cy="19.35" r="9.7" fill="#ffffff"/><circle cx="20.2" cy="19.35" r="7.9" fill="#4f8f2f"/><path d="M20.2 21 m-6 5 a7.9 7.9 0 0 0 12 0 Z" fill="#6db33f"/><path d="M16 11.9 Q20.2 10.9 24.4 11.9 L22.6 16.2 V20 L23.3 20.8 L22.5 21.6 L23.2 22.5 L22.5 23.4 V25.6 L21.4 26.4 H19.4 L18.4 25.4 V16.2 Z" fill="#ffffff"/><ellipse cx="20.3" cy="12.6" rx="1.5" ry="0.8" fill="#2f6a1f"/></g></svg>
<div style="left:1353.30px;top:14.24px;font-size:14.60px;line-height:14.60px;color:#ffffff;white-space:pre;letter-spacing:-0.015px;">Demo Passwords - KeePassXC</div>
<div style="left:2478.00px;top:19.50px;width:12.00px;height:1.00px;background:#e8e8e8;"></div>
<div style="left:2538.80px;top:14.50px;width:11.90px;height:11.10px;background:transparent;border:1px solid #e8e8e8;box-sizing:border-box;"></div>
<svg style="left:2599.00px;top:14.00px;width:13.00px;height:12.00px" viewBox="2599.00 14.00 13.00 12.00"><path d="M2599.5 14.5 L2611.4 25.5 M2611.4 14.5 L2599.5 25.5" stroke="#e8e8e8" stroke-width="1.1"/></svg>
<div style="left:1318.00px;top:39.00px;width:1318.00px;height:124.00px;background:#2d2d2d;"></div>
<div style="left:1318.00px;top:163.00px;width:1318.00px;height:2.00px;background:#4a4a4a;"></div>
<div style="left:1333.40px;top:53.99px;font-size:17.50px;line-height:17.50px;color:#dcdcdc;white-space:pre;letter-spacing:-0.271px;">Database</div>
<div style="left:1432.00px;top:53.99px;font-size:17.50px;line-height:17.50px;color:#dcdcdc;white-space:pre;letter-spacing:-0.321px;">Entries</div>
<div style="left:1510.00px;top:53.99px;font-size:17.50px;line-height:17.50px;color:#dcdcdc;white-space:pre;letter-spacing:-0.080px;">Groups</div>
<div style="left:1592.70px;top:53.99px;font-size:17.50px;line-height:17.50px;color:#dcdcdc;white-space:pre;letter-spacing:-0.241px;">Tools</div>
<div style="left:1658.80px;top:53.99px;font-size:17.50px;line-height:17.50px;color:#dcdcdc;white-space:pre;letter-spacing:-0.142px;">View</div>
<div style="left:1721.60px;top:53.99px;font-size:17.50px;line-height:17.50px;color:#dcdcdc;white-space:pre;letter-spacing:0.146px;">Help</div>
<svg style="left:1342.00px;top:104.00px;width:39.00px;height:31.00px" viewBox="1342.00 104.00 39.00 31.00"><g transform="translate(1318.00,0)" fill="#d2d2d2"><path d="M26.5 113.2 V109.1 Q26.5 106.9 28.7 106.9 H39.2 L42.4 110 H55.6 Q57.3 110.1 57.9 113.2 Z"/><rect x="26.5" y="109" width="3.1" height="21"/><path d="M26.5 129.7 H57.9 L57.4 131 Q56.8 132.6 55 132.6 H29.4 Q26.5 132.6 26.5 130 Z"/><path d="M33.2 116.5 H60.9 L57.6 130.5 H54.3 L57.2 119.9 H35.8 L32.3 130.5 H28.8 Z"/></g></svg>
<svg style="left:1409.00px;top:103.00px;width:33.00px;height:33.00px" viewBox="1409.00 103.00 33.00 33.00"><g transform="translate(1318.00,0)"><path d="M94.35 107.4 Q94.35 106.65 95.1 106.65 H115.3 L120.15 111.5 V131.7 Q120.15 132.45 119.4 132.45 H95.1 Q94.35 132.45 94.35 131.7 Z" fill="none" stroke="#6e6e6e" stroke-width="3.1" stroke-linejoin="round"/><rect x="97.7" y="110.3" width="14.1" height="6" fill="#6e6e6e"/><circle cx="107.1" cy="124.8" r="4.8" fill="#6e6e6e"/></g></svg>
<div style="left:1464.40px;top:94.20px;width:1.20px;height:52.60px;background:#3d3d3d;"></div>
<div style="left:1672.80px;top:94.20px;width:1.20px;height:52.60px;background:#3d3d3d;"></div>
<div style="left:1945.90px;top:94.20px;width:1.20px;height:52.60px;background:#3d3d3d;"></div>
<div style="left:2025.40px;top:94.20px;width:1.20px;height:52.60px;background:#3d3d3d;"></div>
<div style="left:2169.40px;top:94.20px;width:1.20px;height:52.60px;background:#3d3d3d;"></div>
<svg style="left:1487.60px;top:102.80px;width:34.00px;height:34.00px" viewBox="1487.60 102.80 34.00 34.00"><circle cx="1504.60" cy="119.80" r="14.8" fill="none" stroke="#d2d2d2" stroke-width="3"/><path d="M1496.60 119.80 H1512.60 M1504.60 111.60 V128.00" stroke="#d2d2d2" stroke-width="3"/></svg>
<svg style="left:1552.30px;top:102.80px;width:34.00px;height:34.00px" viewBox="1552.30 102.80 34.00 34.00"><circle cx="1569.30" cy="119.80" r="14.8" fill="none" stroke="#d2d2d2" stroke-width="3"/><path d="M1562.10 127.00 L1572.50 116.60" stroke="#d2d2d2" stroke-width="3.6"/><path d="M1573.90 115.20 L1576.10 113.00" stroke="#d2d2d2" stroke-width="3.6"/></svg>
<svg style="left:1617.00px;top:102.80px;width:34.00px;height:34.00px" viewBox="1617.00 102.80 34.00 34.00"><circle cx="1634.00" cy="119.80" r="14.8" fill="none" stroke="#d2d2d2" stroke-width="3"/><path d="M1628.40 114.20 L1639.60 125.40 M1639.60 114.20 L1628.40 125.40" stroke="#d2d2d2" stroke-width="3"/></svg>
<svg style="left:1695.00px;top:104.00px;width:36.00px;height:32.00px" viewBox="1695.00 104.00 36.00 32.00"><g transform="translate(1318.00,0)" fill="#d2d2d2"><circle cx="392.1" cy="113.2" r="4.8" fill="none" stroke="#d2d2d2" stroke-width="3.3"/><path fill-rule="evenodd" d="M379.1 132.8 V127.5 C379.1 123.5 385 121.3 391.5 121.3 C395 121.3 398 121.8 399.8 123.2 C398 125.5 396.6 129.5 397.4 132.8 Z M382.1 129.6 H394.1 C394 127.6 394.3 125.9 394.9 124.6 C393.6 124.4 392.5 124.3 391.5 124.3 C386 124.3 382.1 126 382.1 127.8 Z"/><rect x="400.2" y="127.9" width="7.2" height="3.2"/><path d="M406.6 124.9 L411.2 129.5 L406.6 134 Z"/></g></svg>
<svg style="left:1759.00px;top:103.00px;width:37.00px;height:33.00px" viewBox="1759.00 103.00 37.00 33.00"><g transform="translate(1318.00,0)" fill="#d2d2d2"><circle cx="450.6" cy="112.3" r="4.9" fill="none" stroke="#d2d2d2" stroke-width="4"/><rect x="456" y="110.2" width="19.9" height="4.6"/><rect x="464.6" y="114" width="4.9" height="5.8"/><rect x="453.1" y="128" width="9.4" height="3.1"/><path d="M462 124.9 L466.4 129.5 L462 134 Z"/></g></svg>
<svg style="left:1824.00px;top:102.00px;width:37.00px;height:36.00px" viewBox="1824.00 102.00 37.00 36.00"><g transform="translate(1318.00,0)"><g transform="translate(524.35,119.8) scale(1.605) translate(-12,-12)"><path fill="#d2d2d2" fill-rule="evenodd" d="M17.9,17.39C17.64,16.59 16.89,16 16,16H15V13A1,1 0 0,0 14,12H8V10H10A1,1 0 0,0 11,9V7H13A2,2 0 0,0 15,5V4.59C17.93,5.77 20,8.64 20,12C20,14.08 19.2,15.97 17.9,17.39M11,19.93C7.05,19.44 4,16.08 4,12C4,11.38 4.08,10.78 4.21,10.21L9,15V16A2,2 0 0,0 11,18M12,2A10,10 0 0,0 2,12A10,10 0 0,0 12,22A10,10 0 0,0 22,12A10,10 0 0,0 12,2Z"/></g><circle cx="534.6" cy="131.6" r="10.6" fill="#2d2d2d"/><rect x="529.3" y="128" width="7" height="3"/><path d="M535.5 125 L540.2 129.5 L535.5 134 Z" fill="#d2d2d2"/><rect x="529.3" y="128" width="7" height="3" fill="#d2d2d2"/></g></svg>
<svg style="left:1889.00px;top:110.00px;width:36.00px;height:21.00px" viewBox="1889.00 110.00 36.00 21.00"><g transform="translate(1318.00,0)"><rect x="572.80" y="111.90" width="2.60" height="2.90" rx="0.5" fill="#d2d2d2"/><rect x="577.70" y="111.90" width="2.60" height="2.90" rx="0.5" fill="#d2d2d2"/><rect x="582.50" y="111.90" width="2.70" height="2.90" rx="0.5" fill="#d2d2d2"/><rect x="587.40" y="111.90" width="2.70" height="2.90" rx="0.5" fill="#d2d2d2"/><rect x="592.30" y="111.90" width="2.70" height="2.90" rx="0.5" fill="#d2d2d2"/><rect x="597.20" y="111.90" width="7.80" height="2.90" rx="0.5" fill="#d2d2d2"/><rect x="572.80" y="116.80" width="4.40" height="2.90" rx="0.5" fill="#d2d2d2"/><rect x="579.30" y="116.80" width="2.70" height="2.90" rx="0.5" fill="#d2d2d2"/><rect x="584.20" y="116.80" width="4.40" height="2.90" rx="0.5" fill="#d2d2d2"/><rect x="590.50" y="116.80" width="2.60" height="2.90" rx="0.5" fill="#d2d2d2"/><rect x="595.40" y="116.80" width="2.70" height="2.90" rx="0.5" fill="#d2d2d2"/><rect x="600.30" y="116.80" width="4.70" height="2.90" rx="0.5" fill="#d2d2d2"/><rect x="572.80" y="121.70" width="5.70" height="2.90" rx="0.5" fill="#d2d2d2"/><rect x="580.80" y="121.70" width="4.10" height="2.90" rx="0.5" fill="#d2d2d2"/><rect x="587.20" y="121.70" width="2.50" height="2.90" rx="0.5" fill="#d2d2d2"/><rect x="592.30" y="121.70" width="4.50" height="2.90" rx="0.5" fill="#d2d2d2"/><rect x="599.00" y="121.70" width="6.00" height="2.90" rx="0.5" fill="#d2d2d2"/><rect x="579.30" y="126.40" width="19.30" height="2.90" rx="0.5" fill="#d2d2d2"/></g></svg>
<svg style="left:1971.00px;top:100.00px;width:31.00px;height:38.00px" viewBox="1971.00 100.00 31.00 38.00"><g transform="translate(1318.00,0)" fill="none" stroke="#d2d2d2" stroke-width="3.1"><path d="M662 115 V109.9 A6.2 6.2 0 0 1 674.6 109.9 V115"/><rect x="657.05" y="114.85" width="22.4" height="19.2" rx="2"/><circle cx="668.2" cy="124.5" r="3.2" fill="#d2d2d2" stroke="none"/></g></svg>
<svg style="left:2049.00px;top:103.00px;width:34.00px;height:34.00px" viewBox="2049.00 103.00 34.00 34.00"><g transform="translate(1318.00,0)"><rect x="734.8" y="106.4" width="26" height="26.4" rx="2.2" fill="none" stroke="#d2d2d2" stroke-width="3"/><circle cx="740.5" cy="112.4" r="2.4" fill="#d2d2d2"/><circle cx="747.9" cy="119.8" r="2.4" fill="#d2d2d2"/><circle cx="755.2" cy="127.1" r="2.4" fill="#d2d2d2"/></g></svg>
<svg style="left:2112.00px;top:102.00px;width:37.00px;height:36.00px" viewBox="2112.00 102.00 37.00 36.00"><g transform="translate(1318.00,0)" fill="none" stroke="#d2d2d2" stroke-width="2.9" stroke-linejoin="miter"><path d="M808.75 109.40 L809.80 105.30 L814.90 105.30 L815.95 109.40 L819.56 111.48 L823.63 110.34 L826.18 114.76 L823.16 117.72 L823.16 121.88 L826.18 124.84 L823.63 129.26 L819.56 128.12 L815.95 130.20 L814.90 134.30 L809.80 134.30 L808.75 130.20 L805.14 128.12 L801.07 129.26 L798.52 124.84 L801.54 121.88 L801.54 117.72 L798.52 114.76 L801.07 110.34 L805.14 111.48 Z"/><circle cx="812.35" cy="119.80" r="4.9"/></g></svg>
<div style="left:2183.00px;top:97.60px;width:431.50px;height:44.00px;background:#242426;border:1px solid #4a4a4c;box-sizing:border-box;border-radius:2px;"></div>
<svg style="left:2194.00px;top:108.00px;width:22.00px;height:22.00px" viewBox="2194.00 108.00 22.00 22.00"><g transform="translate(1318.00,0)" fill="none" stroke="#d2d2d2"><circle cx="884.7" cy="117.6" r="5.4" stroke-width="1.9"/><path d="M888.6 121.5 L895.2 127.6" stroke-width="2.3"/></g></svg>
<div style="left:2240.50px;top:115.49px;font-size:17.50px;line-height:17.50px;color:#9a9a9a;white-space:pre;letter-spacing:-0.392px;">Search (Ctrl+F)...</div>
<svg style="left:2584.00px;top:108.00px;width:17.00px;height:24.00px" viewBox="2584.00 108.00 17.00 24.00"><g transform="translate(1318.00,0)" fill="none" stroke="#d2d2d2" stroke-width="2.8"><path d="M1269.9 115.6 C1269.9 112.6 1271.9 111 1274.3 111 C1276.9 111 1278.9 112.8 1278.9 115.2 C1278.9 117.6 1277 118.6 1275.6 119.9 C1274.6 120.8 1274.3 121.6 1274.3 123.6"/><rect x="1272.7" y="126.7" width="3.2" height="3.3" fill="#d2d2d2" stroke="none"/></g></svg>
<div style="left:1380.00px;top:225.00px;width:234.00px;height:44.50px;background:#334633;"></div>
<div style="left:1404.60px;top:197.09px;font-size:17.50px;line-height:17.50px;color:#dcdcdc;white-space:pre;letter-spacing:-0.572px;">Passwords</div>
<div style="left:1428.90px;top:241.99px;font-size:17.50px;line-height:17.50px;color:#dcdcdc;white-space:pre;letter-spacing:0.282px;">Internet</div>
<div style="left:1452.70px;top:286.89px;font-size:17.50px;line-height:17.50px;color:#dcdcdc;white-space:pre;letter-spacing:0.205px;">Coding</div>
<div style="left:1452.70px;top:331.79px;font-size:17.50px;line-height:17.50px;color:#dcdcdc;white-space:pre;letter-spacing:-0.050px;">Gaming</div>
<div style="left:1452.70px;top:376.69px;font-size:17.50px;line-height:17.50px;color:#dcdcdc;white-space:pre;letter-spacing:0.252px;">Shopping</div>
<div style="left:1452.70px;top:421.59px;font-size:17.50px;line-height:17.50px;color:#dcdcdc;white-space:pre;letter-spacing:-0.537px;">Social</div>
<div style="left:1429.00px;top:466.49px;font-size:17.50px;line-height:17.50px;color:#dcdcdc;white-space:pre;letter-spacing:0.370px;">My Computer</div>
<div style="left:1429.00px;top:511.39px;font-size:17.50px;line-height:17.50px;color:#dcdcdc;white-space:pre;letter-spacing:-0.188px;">Real world</div>
<div style="left:1429.00px;top:556.29px;font-size:17.50px;line-height:17.50px;color:#dcdcdc;white-space:pre;letter-spacing:-0.540px;">Recycle Bin</div>
<svg style="left:1338.00px;top:197.00px;width:13.00px;height:10.00px" viewBox="1338.00 197.00 13.00 10.00"><path d="M1338.20 197.2 L1350.30 197.2 L1344.25 206.2 Z" fill="#b4b4b4"/></svg>
<svg style="left:1362.00px;top:242.00px;width:13.00px;height:10.00px" viewBox="1362.00 242.00 13.00 10.00"><path d="M1362.20 242.6 L1374.00 242.6 L1368.10 250.9 Z" fill="#b4b4b4"/></svg>
<svg style="left:1362.00px;top:189.00px;width:31.00px;height:26.00px" viewBox="1362.00 189.00 31.00 26.00"><g transform="translate(1318.00,0)"><path d="M45 193 A2 2 0 0 1 47 191 H55 L58 194 H71.2 A2 2 0 0 1 73.2 196 V211 A2 2 0 0 1 71.2 213 H47 A2 2 0 0 1 45 211 Z" fill="#f4a522"/><path d="M45 197 A2 2 0 0 1 47 195.5 H71.2 A2 2 0 0 1 73.2 197.5 V211 A2 2 0 0 1 71.2 213 H47 A2 2 0 0 1 45 211 Z" fill="#fec72e"/></g></svg>
<svg style="left:1385.00px;top:231.00px;width:32.00px;height:32.00px" viewBox="1385.00 231.00 32.00 32.00"><g transform="translate(1318.00,0)"><circle cx="83.2" cy="247" r="14.4" fill="#3a9bd0"/><path d="M71.1 246.2 L72.1 240.9 L75.7 237.5 L79.8 237.7 L80.6 239.7 L77.3 240.1 L76.5 242.3 L80.2 242 L81.4 243.8 L77.7 245.8 L75.3 247.4 L74.9 249.8 L72.1 249 Z" fill="#97c65c"/><path d="M82.2 234.5 L87.4 235.3 L86.6 237.5 L83.4 240.3 Z" fill="#97c65c"/><path d="M75.7 251.8 L79.4 250.8 L83 253.9 L81.8 256.3 L79.4 258.7 L77.3 257.1 L76.1 253.9 Z" fill="#97c65c"/><path d="M91.5 237.7 L94.7 241.7 L95.9 247.4 L94.7 252.3 L91.5 256.3 L89.9 254.3 L89.1 251.4 L85 249.8 L85.8 245.8 L88.3 242.6 L89.5 239.7 Z" fill="#97c65c"/></g></svg>
<svg style="left:1412.00px;top:279.00px;width:27.00px;height:26.00px" viewBox="1412.00 279.00 27.00 26.00"><g transform="translate(1318.00,0)"><rect x="95" y="280" width="24" height="23.5" fill="#c4cbd4"/><rect x="96" y="283" width="22" height="19.5" fill="#1d2530"/><path d="M99 286.5 L106 290 L99 293.5" fill="none" stroke="#7ed321" stroke-width="1.8"/><rect x="107" y="296.5" width="8" height="1.8" fill="#7ed321"/></g></svg>
<svg style="left:1410.00px;top:323.00px;width:31.00px;height:28.00px" viewBox="1410.00 323.00 31.00 28.00"><g transform="translate(1318.00,0)"><rect x="93" y="324.2" width="28.7" height="20" rx="1" fill="#b4b9bf"/><rect x="95" y="326.2" width="24.7" height="16" fill="#7cc3ee"/><path d="M101 329 L107 328 V334 H101 Z M108 327.8 L115 326.8 V334 H108 Z M101 335 H107 V341 L101 340 Z M108 335 H115 V342 L108 341 Z" fill="#2f86d8"/><path d="M104 344.2 H111 L112.5 349.5 H102.5 Z" fill="#a3a8ad"/></g></svg>
<svg style="left:1408.00px;top:372.00px;width:35.00px;height:24.00px" viewBox="1408.00 372.00 35.00 24.00"><g transform="translate(1318.00,0)"><rect x="91.6" y="373.4" width="31.6" height="15.5" fill="#23b48f"/><path d="M97 376 H118 L121 381 L118 386 H97 Z" fill="#e8f2ee"/><circle cx="108" cy="381" r="4.6" fill="#23b48f"/><rect x="106.8" y="378" width="2.2" height="6" fill="#ffffff"/><rect x="92" y="381" width="6.5" height="13.5" rx="2.5" fill="#f6b31c"/><ellipse cx="104" cy="392" rx="5.5" ry="2.6" fill="#f6b31c"/></g></svg>
<svg style="left:1413.00px;top:411.00px;width:25.00px;height:31.00px" viewBox="1413.00 411.00 25.00 31.00"><g transform="translate(1318.00,0)"><path d="M96 440.5 V437 C96 432.5 100 430 107 430 C114 430 118.4 432.5 118.4 437 V440.5 Z" fill="#607284"/><path d="M105.5 430.5 L108.5 430.5 L108 438 L107 440 L106 438 Z" fill="#e23b3b"/><path d="M104 430 L107 434 L110 430 Z" fill="#ffffff"/><ellipse cx="107.2" cy="422.5" rx="5.6" ry="6.8" fill="#f5b04a"/><path d="M101.4 421 C101 415 104 412.7 107.2 412.7 C110.5 412.7 113.3 415 113 421 C112 418 110 417.5 107.2 417.5 C104.3 417.5 102.5 418 101.4 421 Z" fill="#3b3b3b"/></g></svg>
<svg style="left:1385.00px;top:457.00px;width:32.00px;height:29.00px" viewBox="1385.00 457.00 32.00 29.00"><g transform="translate(1318.00,0)"><rect x="68.8" y="458.9" width="28.7" height="20.5" rx="1" fill="#b8bcc0"/><rect x="70.8" y="460.9" width="24.7" height="16" fill="#4a5a78"/><path d="M70.8 476.9 L95.5 460.9 V476.9 Z" fill="#56668a"/><path d="M79.5 479.4 H86.8 L88.8 484.8 H77.5 Z" fill="#a0a5aa"/></g></svg>
<svg style="left:1386.00px;top:502.00px;width:30.00px;height:30.00px" viewBox="1386.00 502.00 30.00 30.00"><g transform="translate(1318.00,0)"><path d="M72.3 517 L83.2 507 L94 517 V530.6 H72.3 Z" fill="#e9edf2"/><rect x="70.5" y="527" width="25.5" height="3.6" fill="#c9d6e6"/><path d="M69.7 515.6 L83.2 503.6 L96.6 515.6" fill="none" stroke="#c9141c" stroke-width="1.8"/><rect x="80.8" y="511" width="3.8" height="3.8" fill="#1f5aa6"/><rect x="78.8" y="519.5" width="8.5" height="11" fill="#e4501e"/></g></svg>
<svg style="left:1389.00px;top:550.00px;width:25.00px;height:27.00px" viewBox="1389.00 550.00 25.00 27.00"><g transform="translate(1318.00,0)"><path d="M72.5 553 H93.8 L91 574 A1.5 1.5 0 0 1 89.5 575.4 H76.8 A1.5 1.5 0 0 1 75.3 574 Z" fill="#b39ddb"/><rect x="72" y="551.2" width="22.3" height="2.6" rx="1" fill="#7e57c2"/></g></svg>
<div style="left:1616.50px;top:550.00px;width:3.00px;height:37.00px;background:transparent;border:1px solid #2f2f31;box-sizing:border-box;"></div>
<div style="left:1622.00px;top:180.00px;width:1000.00px;height:420.00px;background:#2a2a2d;border:1px solid #505052;box-sizing:border-box;"></div>
<div style="left:1623.00px;top:181.00px;width:998.00px;height:41.00px;background:#3c3c3f;"></div>
<div style="left:1623.00px;top:222.00px;width:998.00px;height:1.00px;background:#505052;"></div>
<div style="left:1658.00px;top:181.00px;width:1.00px;height:41.00px;background:#565658;"></div>
<div style="left:1694.00px;top:181.00px;width:1.00px;height:41.00px;background:#565658;"></div>
<div style="left:1880.00px;top:181.00px;width:1.00px;height:41.00px;background:#565658;"></div>
<div style="left:2066.00px;top:181.00px;width:1.00px;height:41.00px;background:#565658;"></div>
<div style="left:2251.00px;top:181.00px;width:1.00px;height:41.00px;background:#565658;"></div>
<div style="left:2435.00px;top:181.00px;width:1.00px;height:41.00px;background:#565658;"></div>
<div style="left:1706.40px;top:197.09px;font-size:17.50px;line-height:17.50px;color:#d8d8d8;white-space:pre;letter-spacing:0.156px;">Title</div>
<div style="left:1892.10px;top:197.09px;font-size:17.50px;line-height:17.50px;color:#d8d8d8;white-space:pre;letter-spacing:-0.252px;">Username</div>
<div style="left:2078.00px;top:197.09px;font-size:17.50px;line-height:17.50px;color:#d8d8d8;white-space:pre;letter-spacing:-1.850px;">URL</div>
<div style="left:2262.40px;top:197.09px;font-size:17.50px;line-height:17.50px;color:#d8d8d8;white-space:pre;letter-spacing:0.331px;">Notes</div>
<div style="left:2447.00px;top:197.09px;font-size:17.50px;line-height:17.50px;color:#d8d8d8;white-space:pre;letter-spacing:0.650px;">Modified</div>
<svg style="left:1634.00px;top:191.00px;width:16.00px;height:22.00px" viewBox="1634.00 191.00 16.00 22.00"><g transform="translate(1318.00,0)" fill="none" stroke="#d8d8d8" stroke-width="1.6" stroke-linecap="round"><path d="M326.6 198 V206 A3 3 0 0 1 320.6 206 V197 A1.9 1.9 0 0 1 324.4 197 V205.5"/></g></svg>
<svg style="left:1668.00px;top:194.00px;width:19.00px;height:18.00px" viewBox="1668.00 194.00 19.00 18.00"><g transform="translate(1318.00,0)" fill="none" stroke="#d8d8d8" stroke-width="1.8"><circle cx="359.4" cy="202.6" r="6.5"/><path d="M359.4 198.5 V202.8 L362.6 205.2"/></g></svg>
<svg style="left:1842.00px;top:191.00px;width:25.00px;height:18.00px" viewBox="1842.00 191.00 25.00 18.00"><path d="M1843.90 206.8 L1854.35 192.9 L1864.80 206.8 Z" fill="#c4c4c4"/></svg>
<div style="left:1623.00px;top:222.50px;width:998.00px;height:45.00px;background:#2d5330;"></div>
<div style="left:1744.00px;top:240.69px;font-size:17.50px;line-height:17.50px;color:#e8e8e8;white-space:pre;letter-spacing:0.175px;">Apple</div>
<div style="left:1886.04px;top:240.69px;font-size:17.50px;line-height:17.50px;color:#e8e8e8;white-space:pre;letter-spacing:0.302px;">john.doe@icloud.com</div>
<div style="left:2073.60px;top:240.69px;font-size:17.50px;line-height:17.50px;color:#e8e8e8;white-space:pre;letter-spacing:0.261px;">https://www.icloud.c...</div>
<div style="left:2258.00px;top:240.69px;font-size:17.50px;line-height:17.50px;color:#e8e8e8;white-space:pre;letter-spacing:0.005px;">Username is the Ap...</div>
<div style="left:2442.50px;top:240.69px;font-size:17.50px;line-height:17.50px;color:#e8e8e8;white-space:pre;letter-spacing:0.102px;">5/29/2020 2:25 PM</div>
<div style="left:1623.00px;top:267.50px;width:998.00px;height:45.00px;background:#303034;"></div>
<div style="left:1744.00px;top:285.69px;font-size:17.50px;line-height:17.50px;color:#dcdcdc;white-space:pre;letter-spacing:0.392px;">Dropbox</div>
<div style="left:1886.04px;top:285.69px;font-size:17.50px;line-height:17.50px;color:#dcdcdc;white-space:pre;letter-spacing:0.054px;">john.doe@example....</div>
<div style="left:2073.60px;top:285.69px;font-size:17.50px;line-height:17.50px;color:#dcdcdc;white-space:pre;letter-spacing:0.478px;">http://www.dropbox...</div>
<div style="left:2442.50px;top:285.69px;font-size:17.50px;line-height:17.50px;color:#dcdcdc;white-space:pre;letter-spacing:0.102px;">5/29/2020 2:25 PM</div>
<div style="left:1623.00px;top:312.50px;width:998.00px;height:45.00px;background:#2b2b2e;"></div>
<div style="left:1744.00px;top:330.69px;font-size:17.50px;line-height:17.50px;color:#dcdcdc;white-space:pre;letter-spacing:-0.199px;">Example Login ...</div>
<div style="left:1886.04px;top:330.69px;font-size:17.50px;line-height:17.50px;color:#dcdcdc;white-space:pre;letter-spacing:0.054px;">john.doe@example....</div>
<div style="left:2073.60px;top:330.69px;font-size:17.50px;line-height:17.50px;color:#dcdcdc;white-space:pre;letter-spacing:0.237px;">https://www.w3scho...</div>
<div style="left:2442.50px;top:330.69px;font-size:17.50px;line-height:17.50px;color:#dcdcdc;white-space:pre;letter-spacing:0.102px;">6/13/2020 5:58 PM</div>
<div style="left:1623.00px;top:357.50px;width:998.00px;height:45.00px;background:#303034;"></div>
<div style="left:1744.00px;top:375.69px;font-size:17.50px;line-height:17.50px;color:#dcdcdc;white-space:pre;letter-spacing:0.113px;">Google</div>
<div style="left:1886.04px;top:375.69px;font-size:17.50px;line-height:17.50px;color:#dcdcdc;white-space:pre;letter-spacing:0.374px;">johndoe@gmail.com</div>
<div style="left:2073.60px;top:375.69px;font-size:17.50px;line-height:17.50px;color:#dcdcdc;white-space:pre;letter-spacing:0.472px;">https://google.com</div>
<div style="left:2442.50px;top:375.69px;font-size:17.50px;line-height:17.50px;color:#dcdcdc;white-space:pre;letter-spacing:0.102px;">5/29/2020 2:27 PM</div>
<div style="left:1623.00px;top:402.50px;width:998.00px;height:45.00px;background:#2b2b2e;"></div>
<div style="left:1744.00px;top:420.69px;font-size:17.50px;line-height:17.50px;color:#dcdcdc;white-space:pre;letter-spacing:-1.400px;">IFTTT</div>
<div style="left:1886.04px;top:420.69px;font-size:17.50px;line-height:17.50px;color:#dcdcdc;white-space:pre;letter-spacing:0.544px;">johndoe</div>
<div style="left:2073.60px;top:420.69px;font-size:17.50px;line-height:17.50px;color:#dcdcdc;white-space:pre;letter-spacing:0.659px;">https://ifttt.com</div>
<div style="left:2442.50px;top:420.69px;font-size:17.50px;line-height:17.50px;color:#dcdcdc;white-space:pre;letter-spacing:0.102px;">5/29/2020 2:25 PM</div>
<div style="left:1623.00px;top:447.50px;width:998.00px;height:45.00px;background:#303034;"></div>
<div style="left:1744.00px;top:465.69px;font-size:17.50px;line-height:17.50px;color:#dcdcdc;white-space:pre;letter-spacing:0.308px;">Netflix</div>
<div style="left:1886.04px;top:465.69px;font-size:17.50px;line-height:17.50px;color:#dcdcdc;white-space:pre;letter-spacing:0.054px;">john.doe@example....</div>
<div style="left:2073.60px;top:465.69px;font-size:17.50px;line-height:17.50px;color:#dcdcdc;white-space:pre;letter-spacing:0.293px;">https://www.netflix.c...</div>
<div style="left:2442.50px;top:465.69px;font-size:17.50px;line-height:17.50px;color:#dcdcdc;white-space:pre;letter-spacing:0.102px;">5/29/2020 2:25 PM</div>
<div style="left:1623.00px;top:492.50px;width:998.00px;height:45.00px;background:#2b2b2e;"></div>
<div style="left:1744.00px;top:510.69px;font-size:17.50px;line-height:17.50px;color:#dcdcdc;white-space:pre;letter-spacing:0.202px;">Nextcloud</div>
<div style="left:1886.04px;top:510.69px;font-size:17.50px;line-height:17.50px;color:#dcdcdc;white-space:pre;letter-spacing:0.350px;">john.doe</div>
<div style="left:2073.60px;top:510.69px;font-size:17.50px;line-height:17.50px;color:#dcdcdc;white-space:pre;letter-spacing:0.210px;">https://apps.nextclo...</div>
<div style="left:2442.50px;top:510.69px;font-size:17.50px;line-height:17.50px;color:#dcdcdc;white-space:pre;letter-spacing:0.102px;">5/29/2020 2:25 PM</div>
<div style="left:1623.00px;top:537.50px;width:998.00px;height:45.00px;background:#303034;"></div>
<div style="left:1744.00px;top:555.69px;font-size:17.50px;line-height:17.50px;color:#dcdcdc;white-space:pre;letter-spacing:-0.352px;">Pocket</div>
<div style="left:1886.04px;top:555.69px;font-size:17.50px;line-height:17.50px;color:#dcdcdc;white-space:pre;letter-spacing:0.350px;">john.doe</div>
<div style="left:2073.60px;top:555.69px;font-size:17.50px;line-height:17.50px;color:#dcdcdc;white-space:pre;letter-spacing:0.401px;">http://getpocket.co...</div>
<div style="left:2442.50px;top:555.69px;font-size:17.50px;line-height:17.50px;color:#dcdcdc;white-space:pre;letter-spacing:0.102px;">5/29/2020 2:25 PM</div>
<svg style="left:1703.60px;top:230.70px;width:25.60px;height:29.80px" viewBox="1703.60 230.70 25.60 29.80"><g transform="translate(1704.313,231.853) scale(0.6771,0.6515)" fill="#8a9a88"><g transform="translate(21.65,6.2) scale(0.8) translate(-19.55,-5.9)"><path d="M24.5 0 C24.8 3.2 23.6 6.3 21.7 8.4 C19.9 10.5 17 12 14.3 11.8 C14 8.8 15.3 5.7 17.1 3.8 C19 1.7 22 0.2 24.5 0 Z"/></g><path d="M29.2 22.8 C29.2 17.5 33.4 15 33.6 14.8 C31.2 11.3 27.6 10.9 26.3 10.8 C23.2 10.5 20.3 12.6 18.7 12.6 C17.1 12.6 14.7 10.9 12.1 10.9 C8.7 11 5.6 12.9 3.9 15.9 C0.4 22 3 31 6.3 35.9 C8 38.3 9.9 41 12.4 40.9 C14.9 40.8 15.8 39.3 18.8 39.3 C21.8 39.3 22.6 40.9 25.2 40.9 C27.8 40.8 29.5 38.4 31.1 36 C33 33.3 33.8 30.6 33.8 30.5 C33.7 30.4 29.2 28.7 29.2 22.8 Z"/></g></svg>
<svg style="left:1698.00px;top:274.00px;width:37.00px;height:31.00px" viewBox="1698.00 274.00 37.00 31.00"><g transform="translate(1318.00,0)"><g fill="#0061fe"><path d="M381.9 281 L390.2 275.7 L398.5 281 L390.2 286.3 Z"/><path d="M398.5 281 L406.8 275.7 L415 281 L406.8 286.3 Z"/><path d="M381.9 291.6 L390.2 286.3 L398.5 291.6 L390.2 296.9 Z"/><path d="M398.5 291.6 L406.8 286.3 L415 291.6 L406.8 296.9 Z"/><path d="M390.2 298.2 L398.5 292.9 L406.8 298.2 L398.5 303.5 Z"/></g></g></svg>
<svg style="left:1698.00px;top:319.00px;width:37.00px;height:33.00px" viewBox="1698.00 319.00 37.00 33.00"><g transform="translate(1318.00,0)"><rect x="381.9" y="320.7" width="33.1" height="29.7" rx="1.2" fill="#84c044"/><rect x="381.9" y="336" width="33.1" height="14.4" rx="1.2" fill="#79b33b" opacity="0.6"/><path d="M386.4 331.8 Q386.6 336.6 390.6 336.6 Q393.6 336.6 394 333.2 Q394.4 336.6 397.4 336.6 Q401 336.6 401.3 331.8" fill="none" stroke="#ffffff" stroke-width="2.2" stroke-linecap="round"/><path d="M402.2 328.2 Q406 326.6 408.8 327.8 Q410.8 329.6 409.6 332.6 Q408.4 334.6 405.4 334.8 Q409.6 335 410.6 338.2 Q410.8 342.6 406.2 343.4 Q403.6 343.6 401.8 342.6" fill="none" stroke="#ffffff" stroke-width="2.2" stroke-linecap="round" stroke-linejoin="round"/><rect x="387" y="339.9" width="13.5" height="1" fill="#cfe6b8" opacity="0.55"/></g></svg>
<svg style="left:1698.00px;top:363.00px;width:37.00px;height:35.00px" viewBox="1698.00 363.00 37.00 35.00"><g transform="translate(1318.00,0)"><circle cx="398.45" cy="380.30" r="15.8" fill="#ffffff"/><path d="M406.07 373.44 A10.25 10.25 0 0 0 388.95 376.46" fill="none" stroke="#ea4335" stroke-width="4.2"/><path d="M388.95 376.46 A10.25 10.25 0 0 0 389.16 384.63" fill="none" stroke="#fbbc05" stroke-width="4.2"/><path d="M389.16 384.63 A10.25 10.25 0 0 0 406.30 386.89" fill="none" stroke="#34a853" stroke-width="4.2"/><path d="M406.30 386.89 A10.25 10.25 0 0 0 408.70 380.30" fill="none" stroke="#4285f4" stroke-width="4.2"/><rect x="398.45" y="378.15" width="12.35" height="4.3" fill="#4285f4"/></g></svg>
<svg style="left:1698.00px;top:408.00px;width:37.00px;height:36.00px" viewBox="1698.00 408.00 37.00 36.00"><g transform="translate(1318.00,0)"><rect x="381.7" y="409" width="33.1" height="33" fill="#000000"/><text x="384.6" y="429.9" font-family="Liberation Sans" font-weight="bold" font-size="10.4" textLength="27.2" lengthAdjust="spacingAndGlyphs" fill="#ffffff">IFTTT</text></g></svg>
<svg style="left:1705.00px;top:452.00px;width:23.00px;height:36.00px" viewBox="1705.00 452.00 23.00 36.00"><g transform="translate(1318.00,0)"><path d="M388.6 453.5 H394.2 V486.9 L388.6 486 Z" fill="#b1060f"/><path d="M402.8 453.5 H408.4 V486 L402.8 486.9 Z" fill="#b1060f"/><path d="M388.6 453.5 H394.2 L408.4 486 L402.8 486.9 Z" fill="#e50914"/></g></svg>
<svg style="left:1698.00px;top:497.00px;width:37.00px;height:36.00px" viewBox="1698.00 497.00 37.00 36.00"><g transform="translate(1318.00,0)"><rect x="381.7" y="498.6" width="33.1" height="33.1" rx="5" fill="#0082c9"/><circle cx="398.25" cy="515.15" r="5.2" fill="none" stroke="#ffffff" stroke-width="2.6"/><circle cx="387.8" cy="515.15" r="2.8" fill="none" stroke="#ffffff" stroke-width="2"/><circle cx="408.7" cy="515.15" r="2.8" fill="none" stroke="#ffffff" stroke-width="2"/></g></svg>
<svg style="left:1698.00px;top:544.00px;width:37.00px;height:33.00px" viewBox="1698.00 544.00 37.00 33.00"><g transform="translate(1318.00,0)"><path d="M381.7 547.5 A2 2 0 0 1 383.7 545.5 H412.8 A2 2 0 0 1 414.8 547.5 V559 A16.55 16.4 0 0 1 381.7 559 Z" fill="#ef4056"/><path d="M390.5 555.5 L398.25 562.8 L406 555.5" fill="none" stroke="#303034" stroke-width="3.8" stroke-linecap="round" stroke-linejoin="round"/></g></svg>
<div style="left:2101.50px;top:603.50px;width:41.00px;height:1.00px;background:#4a4a4c;"></div>
<svg style="left:1636.70px;top:615.40px;width:38.60px;height:46.50px" viewBox="1636.70 615.40 38.60 46.50"><g transform="translate(1636.639,616.005) scale(1.0846,1.0732)" fill="#9a9a9a"><g transform="translate(21.65,6.2) scale(0.8) translate(-19.55,-5.9)"><path d="M24.5 0 C24.8 3.2 23.6 6.3 21.7 8.4 C19.9 10.5 17 12 14.3 11.8 C14 8.8 15.3 5.7 17.1 3.8 C19 1.7 22 0.2 24.5 0 Z"/></g><path d="M29.2 22.8 C29.2 17.5 33.4 15 33.6 14.8 C31.2 11.3 27.6 10.9 26.3 10.8 C23.2 10.5 20.3 12.6 18.7 12.6 C17.1 12.6 14.7 10.9 12.1 10.9 C8.7 11 5.6 12.9 3.9 15.9 C0.4 22 3 31 6.3 35.9 C8 38.3 9.9 41 12.4 40.9 C14.9 40.8 15.8 39.3 18.8 39.3 C21.8 39.3 22.6 40.9 25.2 40.9 C27.8 40.8 29.5 38.4 31.1 36 C33 33.3 33.8 30.6 33.8 30.5 C33.7 30.4 29.2 28.7 29.2 22.8 Z"/></g></svg>
<div style="left:1703.60px;top:631.08px;font-size:24.00px;line-height:24.00px;color:#dcdcdc;white-space:pre;letter-spacing:-0.030px;">Passwords / Internet / Apple</div>
<div style="left:2574.50px;top:615.50px;width:47.50px;height:45.50px;background:#262628;border:1px solid #444446;box-sizing:border-box;border-radius:2px;"></div>
<svg style="left:2589.20px;top:629.20px;width:18.00px;height:18.00px" viewBox="2589.20 629.20 18.00 18.00"><path d="M2591.20 631.20 L2605.20 645.20 M2605.20 631.20 L2591.20 645.20" stroke="#d2d2d2" stroke-width="2"/></svg>
<div style="left:1622.00px;top:722.00px;width:1000.00px;height:232.50px;background:#3b3b3d;border:1px solid #555557;box-sizing:border-box;"></div>
<div style="left:1719.00px;top:680.50px;width:116.50px;height:42.00px;background:#3b3b3d;border:1px solid #505052;box-sizing:border-box;"></div>
<div style="left:1835.00px;top:680.50px;width:109.50px;height:42.00px;background:#3b3b3d;border:1px solid #505052;box-sizing:border-box;"></div>
<div style="left:1622.00px;top:680.00px;width:97.50px;height:43.00px;background:#3b3b3d;border:1px solid #555557;border-bottom:none;box-sizing:border-box;"></div>
<div style="left:1622.00px;top:680.00px;width:97.50px;height:4.00px;background:#2c5a2c;"></div>
<div style="left:1641.60px;top:697.09px;font-size:17.50px;line-height:17.50px;color:#dcdcdc;white-space:pre;letter-spacing:-0.350px;">General</div>
<div style="left:1739.80px;top:697.09px;font-size:17.50px;line-height:17.50px;color:#8a8a8a;white-space:pre;letter-spacing:-0.068px;">Advanced</div>
<div style="left:1855.20px;top:697.09px;font-size:17.50px;line-height:17.50px;color:#8a8a8a;white-space:pre;letter-spacing:0.466px;">Autotype</div>
<div style="left:1671.50px;top:747.71px;font-size:17.00px;line-height:17.00px;color:#dedede;white-space:pre;font-weight:bold;letter-spacing:-0.028px;">Username</div>
<div style="left:1767.44px;top:748.09px;font-size:17.50px;line-height:17.50px;color:#dcdcdc;white-space:pre;letter-spacing:0.241px;">john.doe@icloud.com</div>
<div style="left:1676.70px;top:795.31px;font-size:17.00px;line-height:17.00px;color:#dedede;white-space:pre;font-weight:bold;letter-spacing:-0.504px;">Password</div>
<div style="left:1769.00px;top:777.00px;width:47.00px;height:45.00px;background:#262628;border:1px solid #444446;box-sizing:border-box;border-radius:2px;"></div>
<svg style="left:1778.50px;top:785.50px;width:28.00px;height:28.00px" viewBox="1778.50 785.50 28.00 28.00"><g transform="translate(1318.00,7.00)" fill="none" stroke="#d2d2d2" stroke-width="1.9" stroke-linecap="round"><path d="M471.2 786.3 Q480.2 784.2 485.3 792.4 Q484 795 481.6 796.7"/><path d="M467.3 789 Q465 790.8 464.3 792.4 Q469 800.6 477.3 799.3"/><path d="M474.6 789.6 A3.2 3.2 0 0 1 478.2 793.4"/><path d="M465.7 785.6 L481.7 801.3" stroke-width="2"/></g></svg>
<svg style="left:1831.50px;top:798.00px;width:10.00px;height:10.00px" viewBox="1831.50 798.00 10.00 10.00"><circle cx="1836.50" cy="803.00" r="3.9" fill="#dcdcdc"/></svg>
<svg style="left:1842.10px;top:798.00px;width:10.00px;height:10.00px" viewBox="1842.10 798.00 10.00 10.00"><circle cx="1847.10" cy="803.00" r="3.9" fill="#dcdcdc"/></svg>
<svg style="left:1852.70px;top:798.00px;width:10.00px;height:10.00px" viewBox="1852.70 798.00 10.00 10.00"><circle cx="1857.70" cy="803.00" r="3.9" fill="#dcdcdc"/></svg>
<svg style="left:1863.30px;top:798.00px;width:10.00px;height:10.00px" viewBox="1863.30 798.00 10.00 10.00"><circle cx="1868.30" cy="803.00" r="3.9" fill="#dcdcdc"/></svg>
<svg style="left:1873.90px;top:798.00px;width:10.00px;height:10.00px" viewBox="1873.90 798.00 10.00 10.00"><circle cx="1878.90" cy="803.00" r="3.9" fill="#dcdcdc"/></svg>
<svg style="left:1884.50px;top:798.00px;width:10.00px;height:10.00px" viewBox="1884.50 798.00 10.00 10.00"><circle cx="1889.50" cy="803.00" r="3.9" fill="#dcdcdc"/></svg>
<div style="left:1705.50px;top:838.71px;font-size:17.00px;line-height:17.00px;color:#dedede;white-space:pre;font-weight:bold;letter-spacing:0.185px;">Notes</div>
<div style="left:1770.50px;top:837.10px;font-size:16.30px;line-height:16.30px;color:#dcdcdc;white-space:pre;letter-spacing:0.007px;">Username is the Apple ID</div>
<div style="left:2212.30px;top:747.71px;font-size:17.00px;line-height:17.00px;color:#dedede;white-space:pre;font-weight:bold;letter-spacing:-1.618px;">URL</div>
<div style="left:2254.00px;top:748.09px;font-size:17.50px;line-height:17.50px;color:#5fb35f;white-space:pre;letter-spacing:0.477px;text-decoration:underline;text-decoration-thickness:1px;text-underline-offset:2px;">https://www.icloud.com</div>
<div style="left:2160.00px;top:795.31px;font-size:17.00px;line-height:17.00px;color:#dedede;white-space:pre;font-weight:bold;letter-spacing:0.097px;">Expiration</div>
<div style="left:2255.40px;top:795.09px;font-size:17.50px;line-height:17.50px;color:#dcdcdc;white-space:pre;letter-spacing:-0.106px;">Never</div>
<div style="left:1318.00px;top:39.00px;width:1.00px;height:920.00px;background:#323c47;"></div>
<div style="left:0.00px;top:0.00px;width:2635.00px;height:3.00px;background:#000;"></div>
<div style="left:0.00px;top:0.00px;width:3.00px;height:962.00px;background:#000;"></div>
<div style="left:0.00px;top:959.00px;width:2635.00px;height:3.00px;background:#000;"></div>
<div style="left:2632.00px;top:0.00px;width:3.00px;height:962.00px;background:#000;"></div>
</body></html>
